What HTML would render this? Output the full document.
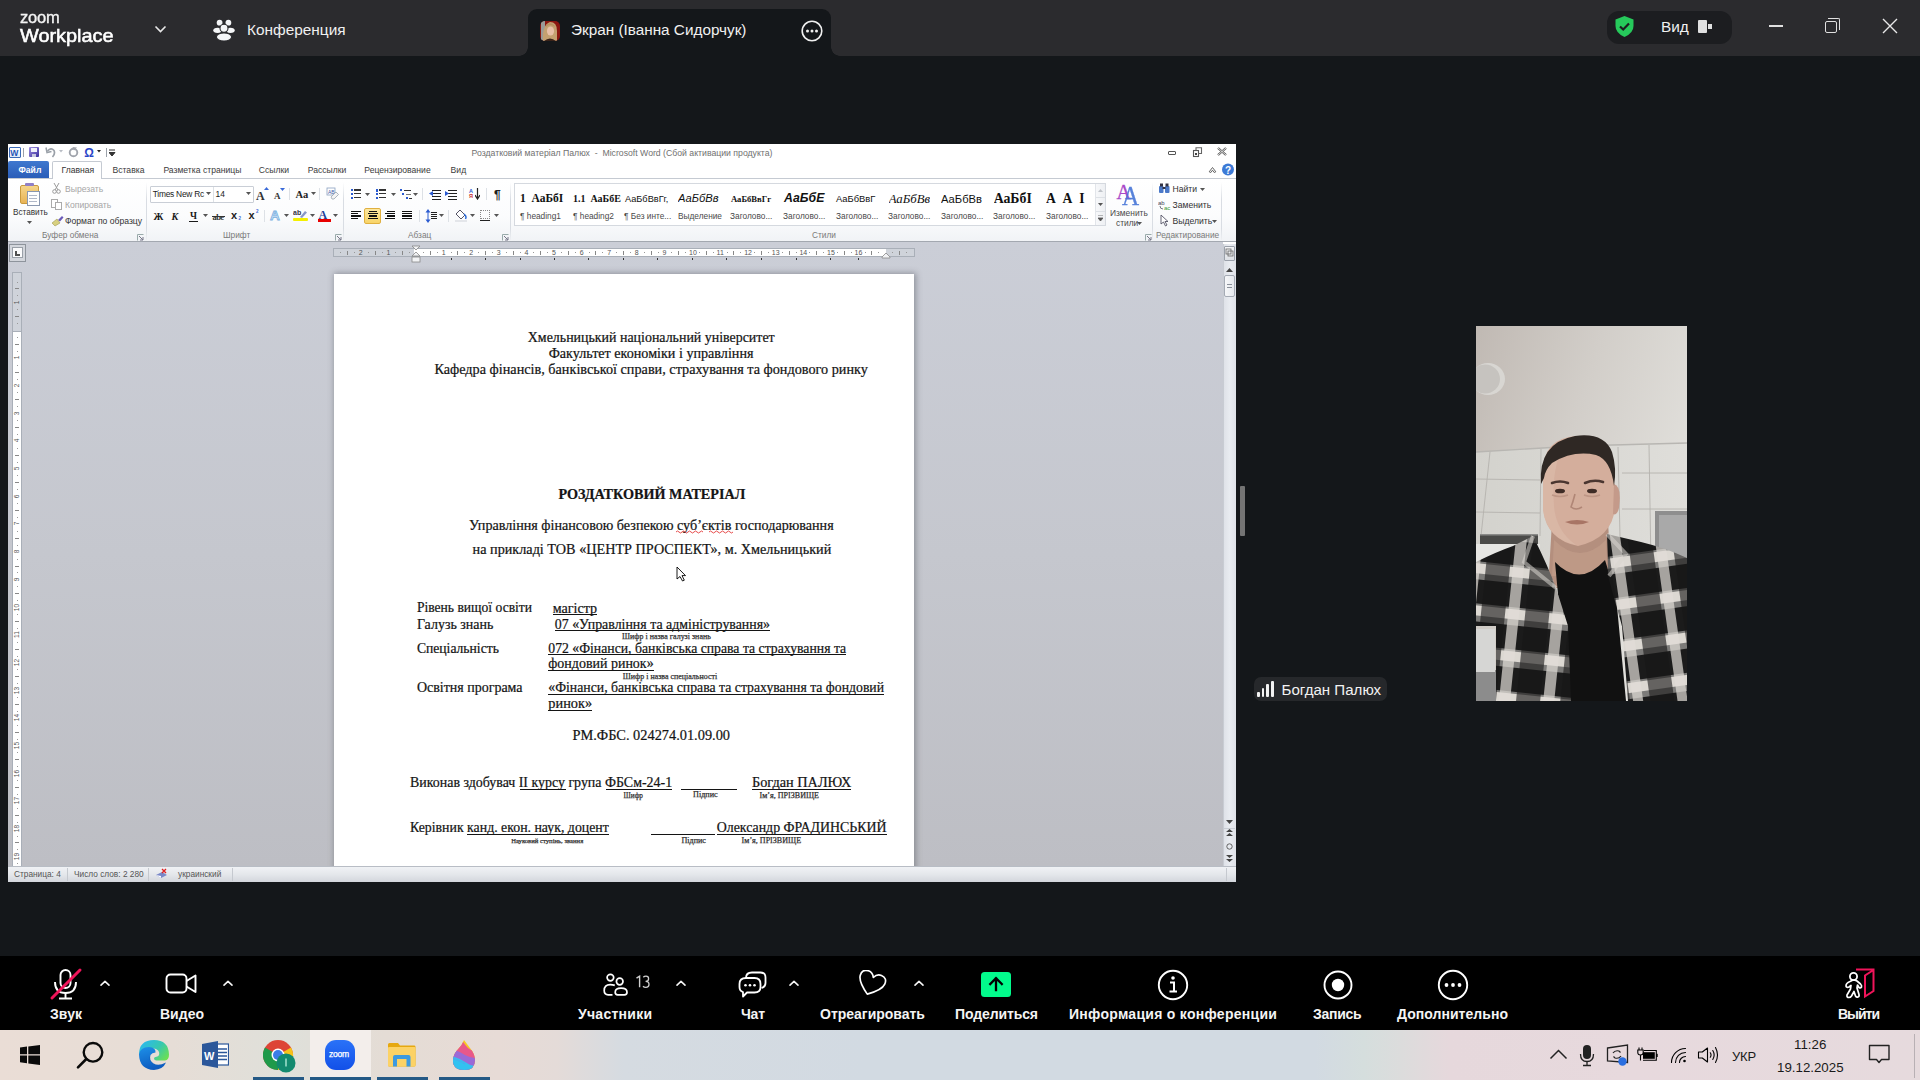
<!DOCTYPE html>
<html><head><meta charset="utf-8">
<style>
*{margin:0;padding:0;box-sizing:border-box}
html,body{width:1920px;height:1080px;overflow:hidden;background:#14171a;font-family:"Liberation Sans",sans-serif}
.a{position:absolute}
.t{position:absolute;white-space:nowrap;line-height:1}
#topbar{left:0;top:0;width:1920px;height:56px;background:#2b2b2e}
</style></head><body>
<div id="topbar" class="a">
  <div class="t" style="left:20px;top:10px;font-size:16px;color:#f4f4f4;-webkit-text-stroke:0.35px #f4f4f4;letter-spacing:-0.2px;transform:scaleX(1.03);transform-origin:0 0">zoom</div>
  <div class="t" style="left:20px;top:27px;font-size:18.6px;color:#fff;-webkit-text-stroke:0.55px #fff;transform:scaleX(1.07);transform-origin:0 0">Workplace</div>
  <svg class="a" style="left:154px;top:24px" width="13" height="10" viewBox="0 0 13 10"><path d="M1.5 2.5 L6.5 7.5 L11.5 2.5" stroke="#e8e8e8" stroke-width="1.6" fill="none"/></svg>
  <svg class="a" style="left:212px;top:18px" width="24" height="24" viewBox="0 0 24 24">
    <circle cx="7.6" cy="4.7" r="2.9" fill="#f5f6f8"/><circle cx="16.4" cy="4.7" r="2.9" fill="#f5f6f8"/>
    <ellipse cx="5.6" cy="12.3" rx="4.3" ry="2.6" fill="#f5f6f8"/><ellipse cx="18.4" cy="12.3" rx="4.3" ry="2.6" fill="#f5f6f8"/>
    <circle cx="12" cy="10.2" r="4" fill="#f5f6f8" stroke="#2b2b2e" stroke-width="1.1"/>
    <ellipse cx="12" cy="19" rx="7.6" ry="4.1" fill="#f5f6f8" stroke="#2b2b2e" stroke-width="1.1"/>
  </svg>
  <div class="t" style="left:247px;top:22px;font-size:15.4px;color:#f0f0f0">Конференция</div>
  <div class="a" style="left:528px;top:9px;width:303px;height:47px;background:#14171a;border-radius:9px 9px 0 0"></div>
  <div class="a" style="left:519px;top:47px;width:9px;height:9px;background:radial-gradient(circle at 0 0,#2b2b2e 8.5px,#14171a 9px)"></div>
  <div class="a" style="left:831px;top:47px;width:9px;height:9px;background:radial-gradient(circle at 100% 0,#2b2b2e 8.5px,#14171a 9px)"></div>
  <svg class="a" style="left:540px;top:21px" width="20" height="20" viewBox="0 0 20 20"><defs><clipPath id="avc"><rect width="20" height="20" rx="5"/></clipPath></defs><g clip-path="url(#avc)"><rect width="20" height="20" fill="#8a1610"/><rect x="1" y="0" width="4" height="20" fill="#9a9a98"/><path d="M3 20 Q2 4 10 1 Q17 1 17 10 L17 20 Z" fill="#c4a070"/><ellipse cx="10.5" cy="10" rx="3.6" ry="4.6" fill="#e8c0a8"/><path d="M6 6 Q10 2 15 6 L14 4 Q10 0.5 6 4 Z" fill="#b89060"/><path d="M4 20 Q10 15 16 20 Z" fill="#3a2218"/></g></svg>
  <div class="t" style="left:571px;top:22px;font-size:15.3px;color:#f0f0f0">Экран (Іванна Сидорчук)</div>
  <svg class="a" style="left:801px;top:20px" width="22" height="22" viewBox="0 0 22 22"><circle cx="11" cy="11" r="9.8" stroke="#f0f0f0" stroke-width="1.6" fill="none"/><circle cx="6.5" cy="11" r="1.5" fill="#f0f0f0"/><circle cx="11" cy="11" r="1.5" fill="#f0f0f0"/><circle cx="15.5" cy="11" r="1.5" fill="#f0f0f0"/></svg>
  <div class="a" style="left:1607px;top:11px;width:125px;height:33px;background:#1c1d20;border-radius:12px"></div>
  <svg class="a" style="left:1614px;top:15px" width="21" height="23" viewBox="0 0 21 23"><path d="M10.5 1 L19.5 4.5 L19.5 11 Q19.5 18 10.5 22 Q1.5 18 1.5 11 L1.5 4.5 Z" fill="#26c95b"/><path d="M6 11.5 L9.2 14.5 L15 8.5" stroke="#1c1d20" stroke-width="2.2" fill="none"/></svg>
  <div class="t" style="left:1661px;top:19px;font-size:15.4px;color:#f0f0f0">Вид</div>
  <div class="a" style="left:1698px;top:20px;width:9px;height:13px;background:#e0e0e0;border-radius:1px"></div>
  <div class="a" style="left:1708px;top:24px;width:3.5px;height:5px;background:#e0e0e0"></div>
  <div class="a" style="left:1769px;top:25px;width:14px;height:2px;background:#e0e0e0"></div>
  <div class="a" style="left:1825px;top:21px;width:12px;height:12px;border:1.5px solid #e0e0e0;border-radius:2px"></div>
  <div class="a" style="left:1828px;top:18px;width:12px;height:12px;border-top:1.5px solid #e0e0e0;border-right:1.5px solid #e0e0e0;border-radius:0 2px 0 0"></div>
  <svg class="a" style="left:1882px;top:18px" width="16" height="16" viewBox="0 0 16 16"><path d="M1 1 L15 15 M15 1 L1 15" stroke="#e8e8e8" stroke-width="1.4"/></svg>
</div>
<div class="a" style="left:8px;top:144px;width:1228px;height:738px;background:#fff;"></div>
<div class="t" style="left:471.5px;top:149.24px;font-family:'Liberation Sans',sans-serif;font-size:8.7px;color:#707070;font-weight:normal;">Роздатковий матеріал Палюх&nbsp; -&nbsp; Microsoft Word (Сбой активации продукта)</div>
<div class="a" style="left:9px;top:147px;width:12px;height:11px;background:linear-gradient(#ffffff,#dfe8f6);border:1px solid #3a6ab8;border-radius:1px"></div>
<div class="t" style="left:10.3px;top:148.92px;font-family:'Liberation Sans',sans-serif;font-size:8.6px;color:#1f56b8;font-weight:bold;letter-spacing:-0.5px">W</div>
<div class="a" style="left:23px;top:148px;width:1px;height:9px;background:#9aa0a8;"></div>
<div class="a" style="left:29px;top:147px;width:10px;height:10px;background:linear-gradient(135deg,#a090e0,#3a2f9e);border-radius:1px"></div>
<div class="a" style="left:31px;top:147.5px;width:6px;height:4px;background:#f0f0fa;"></div>
<div class="a" style="left:32px;top:154px;width:4px;height:2.5px;background:#c8c8e0;"></div>
<svg class="a" style="left:45px;top:146px;" width="11" height="12" viewBox="0 0 11 12"><path d="M2.5 5 Q6 1 9 4.5 Q10.5 8 7.5 11" stroke="#9aa0a8" stroke-width="1.7" fill="none"/><path d="M1 1.5 L2 6.5 L6.5 5.5" stroke="#9aa0a8" stroke-width="1.5" fill="none"/></svg>
<svg class="a" style="left:59px;top:150px;" width="5" height="4" viewBox="0 0 5 4"><path d="M0 0 L4 0 L2 2.5 Z" fill="#b8bcc4"/></svg>
<svg class="a" style="left:68px;top:146px;" width="11" height="12" viewBox="0 0 11 12"><circle cx="5.5" cy="6.5" r="3.8" stroke="#a0a4ac" stroke-width="1.9" fill="none"/><path d="M4.5 1 L9 1.5 L6 4.5" fill="#a0a4ac"/></svg>
<div class="t" style="left:84.3px;top:147.14px;font-family:'Liberation Sans',sans-serif;font-size:12px;color:#2a46c8;font-weight:bold;">Ω</div>
<svg class="a" style="left:97px;top:150px;" width="5" height="4" viewBox="0 0 5 4"><path d="M0 0 L4 0 L2 2.5 Z" fill="#222"/></svg>
<div class="a" style="left:106px;top:148px;width:1px;height:9px;background:#9aa0a8;"></div>
<svg class="a" style="left:109px;top:149px;" width="7" height="8" viewBox="0 0 7 8"><path d="M0 1 H6 M0 3.5 H6 L3 7 Z" stroke="#333" fill="#333" stroke-width="1"/></svg>
<div class="a" style="left:1168px;top:151px;width:8px;height:3.8px;background:#fff;border:1px solid #555;border-radius:1px"></div>
<svg class="a" style="left:1192px;top:146px;" width="12" height="12" viewBox="0 0 12 12"><rect x="1.5" y="4.5" width="5" height="6" fill="#fff" stroke="#555" stroke-width="1.1"/><path d="M4 4.5 V1.8 H9.5 V7.5 H6.5" fill="none" stroke="#666" stroke-width="1.1"/><rect x="3" y="7" width="2" height="2" fill="#444"/></svg>
<svg class="a" style="left:1216px;top:146px;" width="12" height="11" viewBox="0 0 12 11"><path d="M2 2 L10 9 M10 2 L2 9" stroke="#555" stroke-width="2.2"/><path d="M2 2 L10 9 M10 2 L2 9" stroke="#fff" stroke-width="0.8"/></svg>
<div class="a" style="left:8px;top:178px;width:1228px;height:1px;background:#c5cad2;"></div>
<div class="a" style="left:8px;top:161px;width:41px;height:17px;background:linear-gradient(#3f78cf,#2a5db8);border-radius:2px 2px 0 0"></div>
<div class="t" style="left:18.5px;top:165.92px;font-family:'Liberation Sans',sans-serif;font-size:8.6px;color:#fff;font-weight:bold;">Файл</div>
<div class="a" style="left:52px;top:161px;width:50px;height:18px;background:#fff;border:1px solid #c5cad2;border-bottom:none;border-radius:2px 2px 0 0"></div>
<div class="t" style="left:61.5px;top:166.02px;font-family:'Liberation Sans',sans-serif;font-size:8.6px;color:#333;font-weight:normal;">Главная</div>
<div class="t" style="left:112.5px;top:166.02px;font-family:'Liberation Sans',sans-serif;font-size:8.6px;color:#3b3b3b;font-weight:normal;">Вставка</div>
<div class="t" style="left:163.4px;top:166.02px;font-family:'Liberation Sans',sans-serif;font-size:8.6px;color:#3b3b3b;font-weight:normal;">Разметка страницы</div>
<div class="t" style="left:258.8px;top:166.02px;font-family:'Liberation Sans',sans-serif;font-size:8.6px;color:#3b3b3b;font-weight:normal;">Ссылки</div>
<div class="t" style="left:307.7px;top:166.02px;font-family:'Liberation Sans',sans-serif;font-size:8.6px;color:#3b3b3b;font-weight:normal;">Рассылки</div>
<div class="t" style="left:364.3px;top:166.02px;font-family:'Liberation Sans',sans-serif;font-size:8.6px;color:#3b3b3b;font-weight:normal;">Рецензирование</div>
<div class="t" style="left:450.6px;top:166.02px;font-family:'Liberation Sans',sans-serif;font-size:8.6px;color:#3b3b3b;font-weight:normal;">Вид</div>
<svg class="a" style="left:1208px;top:166px;" width="9" height="8" viewBox="0 0 9 8"><path d="M1.2 5.8 L4.5 1.5 L7.8 5.8 L6.2 6.5 L4.5 4.2 L2.8 6.5 Z" stroke="#555" stroke-width="0.9" fill="#fff" stroke-linejoin="round"/></svg>
<svg class="a" style="left:1221px;top:163px;" width="14" height="14" viewBox="0 0 14 14"><circle cx="7" cy="6.5" r="6" fill="#3d7ad6"/><text x="7" y="11" font-family="Liberation Sans" font-weight="bold" font-size="10" fill="#fff" text-anchor="middle">?</text></svg>
<div class="a" style="left:8px;top:179px;width:1228px;height:62px;background:linear-gradient(#ffffff 0%,#fbfcfd 60%,#f1f3f6 100%);"></div>
<div class="a" style="left:8px;top:240.5px;width:1228px;height:1.5px;background:#a3a8b0;"></div>
<div class="a" style="left:146px;top:182px;width:1px;height:58px;background:linear-gradient(#fff,#d9dde3 30%,#d9dde3 80%,#eef0f3);"></div>
<div class="a" style="left:343px;top:182px;width:1px;height:58px;background:linear-gradient(#fff,#d9dde3 30%,#d9dde3 80%,#eef0f3);"></div>
<div class="a" style="left:510px;top:182px;width:1px;height:58px;background:linear-gradient(#fff,#d9dde3 30%,#d9dde3 80%,#eef0f3);"></div>
<div class="a" style="left:1152px;top:182px;width:1px;height:58px;background:linear-gradient(#fff,#d9dde3 30%,#d9dde3 80%,#eef0f3);"></div>
<div class="a" style="left:1221px;top:182px;width:1px;height:58px;background:linear-gradient(#fff,#d9dde3 30%,#d9dde3 80%,#eef0f3);"></div>
<div class="t" style="left:42px;top:231.27px;font-family:'Liberation Sans',sans-serif;font-size:8.3px;color:#7a7a7a;font-weight:normal;">Буфер обмена</div>
<div class="t" style="left:223px;top:231.27px;font-family:'Liberation Sans',sans-serif;font-size:8.3px;color:#7a7a7a;font-weight:normal;">Шрифт</div>
<div class="t" style="left:408px;top:231.27px;font-family:'Liberation Sans',sans-serif;font-size:8.3px;color:#7a7a7a;font-weight:normal;">Абзац</div>
<div class="t" style="left:812px;top:231.27px;font-family:'Liberation Sans',sans-serif;font-size:8.3px;color:#7a7a7a;font-weight:normal;">Стили</div>
<div class="t" style="left:1156px;top:231.27px;font-family:'Liberation Sans',sans-serif;font-size:8.3px;color:#7a7a7a;font-weight:normal;">Редактирование</div>
<svg class="a" style="left:137px;top:234px;" width="7" height="7" viewBox="0 0 7 7"><path d="M0.5 6.5 V0.5 H6.5" stroke="#9aa" fill="none"/><path d="M2 2 L6 6 M6 3 V6 H3" stroke="#778" fill="none"/></svg>
<svg class="a" style="left:335px;top:234px;" width="7" height="7" viewBox="0 0 7 7"><path d="M0.5 6.5 V0.5 H6.5" stroke="#9aa" fill="none"/><path d="M2 2 L6 6 M6 3 V6 H3" stroke="#778" fill="none"/></svg>
<svg class="a" style="left:502px;top:234px;" width="7" height="7" viewBox="0 0 7 7"><path d="M0.5 6.5 V0.5 H6.5" stroke="#9aa" fill="none"/><path d="M2 2 L6 6 M6 3 V6 H3" stroke="#778" fill="none"/></svg>
<svg class="a" style="left:1145px;top:234px;" width="7" height="7" viewBox="0 0 7 7"><path d="M0.5 6.5 V0.5 H6.5" stroke="#9aa" fill="none"/><path d="M2 2 L6 6 M6 3 V6 H3" stroke="#778" fill="none"/></svg>
<div class="a" style="left:20px;top:185px;width:19px;height:19px;background:linear-gradient(#f5d58a,#e8b456);border:1px solid #c99a3e;border-radius:2px"></div>
<div class="a" style="left:25px;top:183px;width:9px;height:3px;background:#9080c8;border-radius:1px"></div>
<div class="a" style="left:27px;top:191px;width:13px;height:15px;background:#fff;border:1px solid #8a98b0"></div>
<div class="a" style="left:29px;top:195px;width:8px;height:1px;background:#b0b8c8;"></div>
<div class="a" style="left:29px;top:198px;width:8px;height:1px;background:#b0b8c8;"></div>
<div class="a" style="left:29px;top:201px;width:8px;height:1px;background:#b0b8c8;"></div>
<div class="t" style="left:13px;top:209.36px;font-family:'Liberation Sans',sans-serif;font-size:8.2px;color:#333;font-weight:normal;">Вставить</div>
<svg class="a" style="left:27px;top:221px;" width="5" height="3" viewBox="0 0 5 3"><path d="M0 0 L5 0 L2.5 3 Z" fill="#555"/></svg>
<svg class="a" style="left:52px;top:183px;" width="9" height="11" viewBox="0 0 9 11"><path d="M2 0 L6 7 M7 0 L3 7" stroke="#9a9a9a" stroke-width="1"/><circle cx="2.5" cy="8.5" r="1.8" stroke="#9a9a9a" fill="none"/><circle cx="6.5" cy="8.5" r="1.8" stroke="#9a9a9a" fill="none"/></svg>
<div class="t" style="left:65px;top:184.92px;font-family:'Liberation Sans',sans-serif;font-size:8.6px;color:#a6a6a6;font-weight:normal;">Вырезать</div>
<svg class="a" style="left:51px;top:199px;" width="12" height="11" viewBox="0 0 12 11"><rect x="0.5" y="0.5" width="6" height="8" fill="#fff" stroke="#aaa"/><rect x="4.5" y="3.5" width="6" height="7" fill="#fff" stroke="#aaa"/></svg>
<div class="t" style="left:65px;top:200.92px;font-family:'Liberation Sans',sans-serif;font-size:8.6px;color:#a6a6a6;font-weight:normal;">Копировать</div>
<svg class="a" style="left:51px;top:215px;" width="13" height="12" viewBox="0 0 13 12"><path d="M1 8 L6 4 L9 8 L4 11 Z" fill="#d8d080" stroke="#a09a50" stroke-width="0.6"/><path d="M7 5 L11 1 L12.5 2.5 L9 6.5" fill="#6a5ab8"/></svg>
<div class="t" style="left:65px;top:216.92px;font-family:'Liberation Sans',sans-serif;font-size:8.6px;color:#333;font-weight:normal;">Формат по образцу</div>
<div class="a" style="left:150px;top:186px;width:104px;height:17px;background:#fff;border:1px solid #c9ced6;border-radius:1px"></div>
<div class="a" style="left:213px;top:187px;width:1px;height:15px;background:#dde1e6;"></div>
<div class="t" style="left:152.8px;top:190.09px;font-family:'Liberation Sans',sans-serif;font-size:8.4px;color:#222;font-weight:normal;letter-spacing:-0.25px">Times New Rc</div>
<svg class="a" style="left:206px;top:192px;" width="5" height="3" viewBox="0 0 5 3"><path d="M0 0 L5 0 L2.5 3 Z" fill="#555"/></svg>
<svg class="a" style="left:246px;top:192px;" width="5" height="3" viewBox="0 0 5 3"><path d="M0 0 L5 0 L2.5 3 Z" fill="#555"/></svg>
<div class="t" style="left:215.6px;top:190.09px;font-family:'Liberation Sans',sans-serif;font-size:8.4px;color:#222;font-weight:normal;">14</div>
<div class="t" style="left:256px;top:189.90px;font-family:'Liberation Serif',serif;font-size:12px;color:#333;font-weight:bold;">A</div>
<svg class="a" style="left:264px;top:187px;" width="5" height="4" viewBox="0 0 5 4"><path d="M0 3 L2.5 0 L5 3 Z" fill="#3a6ad8"/></svg>
<div class="t" style="left:274px;top:192.30px;font-family:'Liberation Serif',serif;font-size:9px;color:#333;font-weight:bold;">A</div>
<svg class="a" style="left:280px;top:188px;" width="5" height="4" viewBox="0 0 5 4"><path d="M0 0 L5 0 L2.5 3 Z" fill="#3a6ad8"/></svg>
<div class="a" style="left:289px;top:188px;width:1px;height:12px;background:#dde1e6;"></div>
<div class="t" style="left:295.5px;top:190.40px;font-family:'Liberation Serif',serif;font-size:10.5px;color:#222;font-weight:bold;">Aa</div>
<svg class="a" style="left:311px;top:192px;" width="5" height="3" viewBox="0 0 5 3"><path d="M0 0 L5 0 L2.5 3 Z" fill="#555"/></svg>
<div class="a" style="left:319px;top:188px;width:1px;height:12px;background:#dde1e6;"></div>
<svg class="a" style="left:326px;top:187px;" width="13" height="13" viewBox="0 0 13 13"><rect x="1" y="1" width="8" height="7" fill="#fff" stroke="#8aa0c0" stroke-width="0.8"/><text x="2" y="7" font-size="5" font-family="Liberation Sans" fill="#3a5aa8">AB</text><path d="M5 10 L10 5 L12.5 7.5 L8 12 L6 12 Z" fill="#f4f4f4" stroke="#9aa4b0" stroke-width="0.8"/></svg>
<div class="t" style="left:153.5px;top:211.50px;font-family:'Liberation Serif',serif;font-size:10px;color:#1a1a1a;font-weight:bold;">Ж</div>
<div class="t" style="left:171.5px;top:211.50px;font-family:'Liberation Serif',serif;font-size:10px;color:#1a1a1a;font-weight:bold;font-style:italic;">К</div>
<div class="t" style="left:190px;top:211.70px;font-family:'Liberation Serif',serif;font-size:9.5px;color:#1a1a1a;font-weight:bold;">Ч</div>
<div class="a" style="left:189px;top:220.5px;width:9px;height:1px;background:#1a1a1a;"></div>
<svg class="a" style="left:203px;top:214px;" width="5" height="3" viewBox="0 0 5 3"><path d="M0 0 L5 0 L2.5 3 Z" fill="#555"/></svg>
<div class="t" style="left:212.5px;top:212.60px;font-family:'Liberation Serif',serif;font-size:8.5px;color:#333;font-weight:bold;letter-spacing:-0.6px">abe</div>
<div class="a" style="left:212px;top:215.5px;width:13px;height:1px;background:#333;"></div>
<div class="t" style="left:231px;top:210.19px;font-family:'Liberation Sans',sans-serif;font-size:11px;color:#222;font-weight:bold;">x</div>
<div class="t" style="left:238.5px;top:217.19px;font-family:'Liberation Sans',sans-serif;font-size:4.5px;color:#3a6ad8;font-weight:bold;">2</div>
<div class="t" style="left:248.5px;top:210.19px;font-family:'Liberation Sans',sans-serif;font-size:11px;color:#222;font-weight:bold;">x</div>
<div class="t" style="left:256px;top:210.19px;font-family:'Liberation Sans',sans-serif;font-size:4.5px;color:#3a6ad8;font-weight:bold;">2</div>
<div class="a" style="left:264px;top:210px;width:1px;height:12px;background:#dde1e6;"></div>
<div class="t" style="left:270px;top:209.07px;font-family:'Liberation Sans',sans-serif;font-size:13.5px;color:#cfe4f8;font-weight:bold;-webkit-text-stroke:0.8px #7ab0e0">A</div>
<svg class="a" style="left:284px;top:214px;" width="5" height="3" viewBox="0 0 5 3"><path d="M0 0 L5 0 L2.5 3 Z" fill="#555"/></svg>
<svg class="a" style="left:293px;top:208px;" width="14" height="11" viewBox="0 0 14 11"><text x="0" y="7" font-size="7" font-family="Liberation Sans" font-weight="bold" fill="#334">ab</text><path d="M7 9 L12 3 L14 4.5 L9 10 Z" fill="#8898c8"/></svg>
<div class="a" style="left:293px;top:218px;width:15px;height:3px;background:#f4f000;border-radius:1px"></div>
<svg class="a" style="left:310px;top:214px;" width="5" height="3" viewBox="0 0 5 3"><path d="M0 0 L5 0 L2.5 3 Z" fill="#555"/></svg>
<div class="t" style="left:318.5px;top:208.90px;font-family:'Liberation Serif',serif;font-size:12px;color:#1f3f9a;font-weight:bold;">A</div>
<div class="a" style="left:318px;top:219px;width:13px;height:3px;background:#e80000;"></div>
<svg class="a" style="left:333px;top:214px;" width="5" height="3" viewBox="0 0 5 3"><path d="M0 0 L5 0 L2.5 3 Z" fill="#555"/></svg>
<div class="a" style="left:350.5px;top:189.0px;width:2px;height:2px;background:#2a5ad0;"></div>
<div class="a" style="left:350.5px;top:192.8px;width:2px;height:2px;background:#2a5ad0;"></div>
<div class="a" style="left:350.5px;top:196.6px;width:2px;height:2px;background:#2a5ad0;"></div>
<div class="a" style="left:354px;top:189.3px;width:7px;height:1.3px;background:#333;"></div>
<div class="a" style="left:354px;top:193.10000000000002px;width:7px;height:1.3px;background:#333;"></div>
<div class="a" style="left:354px;top:196.9px;width:7px;height:1.3px;background:#333;"></div>
<svg class="a" style="left:365px;top:193px;" width="5" height="3" viewBox="0 0 5 3"><path d="M0 0 L5 0 L2.5 3 Z" fill="#555"/></svg>
<div class="a" style="left:375.5px;top:189.0px;width:2px;height:2.5px;background:#2a5ad0;"></div>
<div class="a" style="left:375.5px;top:192.8px;width:2px;height:2.5px;background:#2a5ad0;"></div>
<div class="a" style="left:375.5px;top:196.6px;width:2px;height:2.5px;background:#2a5ad0;"></div>
<div class="a" style="left:379px;top:189.3px;width:7px;height:1.3px;background:#333;"></div>
<div class="a" style="left:379px;top:193.10000000000002px;width:7px;height:1.3px;background:#333;"></div>
<div class="a" style="left:379px;top:196.9px;width:7px;height:1.3px;background:#333;"></div>
<svg class="a" style="left:391px;top:193px;" width="5" height="3" viewBox="0 0 5 3"><path d="M0 0 L5 0 L2.5 3 Z" fill="#555"/></svg>
<div class="a" style="left:400px;top:189px;width:2px;height:2px;background:#2a5ad0;"></div>
<div class="a" style="left:404px;top:189.5px;width:7px;height:1.3px;background:#333;"></div>
<div class="a" style="left:402px;top:193px;width:2px;height:2px;background:#2a5ad0;"></div>
<div class="a" style="left:406px;top:193.5px;width:5px;height:1.3px;background:#777;"></div>
<div class="a" style="left:406px;top:197px;width:2px;height:2px;background:#2a5ad0;"></div>
<div class="a" style="left:409px;top:197.5px;width:3px;height:1.3px;background:#333;"></div>
<svg class="a" style="left:413px;top:193px;" width="5" height="3" viewBox="0 0 5 3"><path d="M0 0 L5 0 L2.5 3 Z" fill="#555"/></svg>
<div class="a" style="left:422px;top:188px;width:1px;height:12px;background:#dde1e6;"></div>
<div class="a" style="left:432px;top:189.5px;width:9px;height:1.4px;background:#222;"></div>
<div class="a" style="left:432px;top:192.5px;width:9px;height:1.4px;background:#222;"></div>
<div class="a" style="left:432px;top:195.5px;width:9px;height:1.4px;background:#222;"></div>
<div class="a" style="left:432px;top:198.5px;width:9px;height:1.4px;background:#222;"></div>
<svg class="a" style="left:429px;top:191px;" width="5" height="5" viewBox="0 0 5 5"><path d="M0 2.5 L4 0 L4 5 Z" fill="#2a5ad0"/></svg>
<div class="a" style="left:448px;top:189.5px;width:9px;height:1.4px;background:#222;"></div>
<div class="a" style="left:448px;top:192.5px;width:9px;height:1.4px;background:#222;"></div>
<div class="a" style="left:448px;top:195.5px;width:9px;height:1.4px;background:#222;"></div>
<div class="a" style="left:448px;top:198.5px;width:9px;height:1.4px;background:#222;"></div>
<svg class="a" style="left:445px;top:191px;" width="5" height="5" viewBox="0 0 5 5"><path d="M4 2.5 L0 0 L0 5 Z" fill="#2a5ad0"/></svg>
<div class="a" style="left:463px;top:188px;width:1px;height:12px;background:#dde1e6;"></div>
<div class="t" style="left:469px;top:189.14px;font-family:'Liberation Sans',sans-serif;font-size:5.5px;color:#2a5ad0;font-weight:bold;">A</div>
<div class="t" style="left:469px;top:194.34px;font-family:'Liberation Sans',sans-serif;font-size:5.5px;color:#c83030;font-weight:bold;">Я</div>
<svg class="a" style="left:475px;top:188px;" width="5" height="12" viewBox="0 0 5 12"><path d="M2.5 0 V10 M0 7 L2.5 11 L5 7" stroke="#222" stroke-width="1.2" fill="none"/></svg>
<div class="a" style="left:486px;top:188px;width:1px;height:12px;background:#dde1e6;"></div>
<div class="t" style="left:494px;top:189.34px;font-family:'Liberation Sans',sans-serif;font-size:12px;color:#222;font-weight:bold;">¶</div>
<div class="a" style="left:364px;top:207.5px;width:17px;height:16px;background:linear-gradient(#fde8a0,#f8d468);border:1px solid #e0b040;border-radius:2px"></div>
<div class="a" style="left:351px;top:211.0px;width:10px;height:1.3px;background:#111;"></div>
<div class="a" style="left:351px;top:213.2px;width:7px;height:1.3px;background:#111;"></div>
<div class="a" style="left:351px;top:215.4px;width:10px;height:1.3px;background:#111;"></div>
<div class="a" style="left:351px;top:217.6px;width:7px;height:1.3px;background:#111;"></div>
<div class="a" style="left:369.0px;top:211.0px;width:8px;height:1.3px;background:#111;"></div>
<div class="a" style="left:368.0px;top:213.2px;width:10px;height:1.3px;background:#111;"></div>
<div class="a" style="left:369.0px;top:215.4px;width:8px;height:1.3px;background:#111;"></div>
<div class="a" style="left:368.0px;top:217.6px;width:10px;height:1.3px;background:#111;"></div>
<div class="a" style="left:387px;top:211.0px;width:8px;height:1.3px;background:#111;"></div>
<div class="a" style="left:385px;top:213.2px;width:10px;height:1.3px;background:#111;"></div>
<div class="a" style="left:387px;top:215.4px;width:8px;height:1.3px;background:#111;"></div>
<div class="a" style="left:385px;top:217.6px;width:10px;height:1.3px;background:#111;"></div>
<div class="a" style="left:402px;top:211.0px;width:10px;height:1.3px;background:#111;"></div>
<div class="a" style="left:402px;top:213.2px;width:10px;height:1.3px;background:#111;"></div>
<div class="a" style="left:402px;top:215.4px;width:10px;height:1.3px;background:#111;"></div>
<div class="a" style="left:402px;top:217.6px;width:10px;height:1.3px;background:#111;"></div>
<div class="a" style="left:419px;top:210px;width:1px;height:12px;background:#dde1e6;"></div>
<svg class="a" style="left:425px;top:209px;" width="6" height="14" viewBox="0 0 6 14"><path d="M3 0 L5.5 3.5 H0.5 Z M3 14 L5.5 10.5 H0.5 Z" fill="#2a5ad0"/><path d="M3 3 V11" stroke="#2a5ad0" stroke-width="1"/></svg>
<div class="a" style="left:431px;top:211.5px;width:6px;height:1.2px;background:#222;"></div>
<div class="a" style="left:431px;top:213.7px;width:6px;height:1.2px;background:#222;"></div>
<div class="a" style="left:431px;top:215.9px;width:6px;height:1.2px;background:#222;"></div>
<div class="a" style="left:431px;top:218.1px;width:6px;height:1.2px;background:#222;"></div>
<svg class="a" style="left:439px;top:214px;" width="5" height="3" viewBox="0 0 5 3"><path d="M0 0 L5 0 L2.5 3 Z" fill="#555"/></svg>
<div class="a" style="left:448px;top:210px;width:1px;height:12px;background:#dde1e6;"></div>
<svg class="a" style="left:454px;top:209px;" width="13" height="12" viewBox="0 0 13 12"><path d="M2 5 L6 1 L11 6 L7 10 Z" fill="#fff" stroke="#556" stroke-width="1"/><path d="M10 5 Q13 7 11.5 10" stroke="#2a6ad8" stroke-width="1.5" fill="none"/></svg>
<div class="a" style="left:455px;top:220px;width:12px;height:2px;background:#e4e6ea;"></div>
<svg class="a" style="left:470px;top:214px;" width="5" height="3" viewBox="0 0 5 3"><path d="M0 0 L5 0 L2.5 3 Z" fill="#555"/></svg>
<div class="a" style="left:480px;top:210px;width:10px;height:9px;background:transparent;border:1px dotted #888"></div>
<div class="a" style="left:480px;top:219.5px;width:10px;height:1.3px;background:#222;"></div>
<svg class="a" style="left:494px;top:214px;" width="5" height="3" viewBox="0 0 5 3"><path d="M0 0 L5 0 L2.5 3 Z" fill="#555"/></svg>
<div class="a" style="left:514px;top:183px;width:592px;height:43px;background:#fff;border:1px solid #d5d9df"></div>
<div class="a" style="left:1095px;top:184px;width:1px;height:41px;background:#e2e5ea;"></div>
<div class="a" style="left:1096px;top:184px;width:9px;height:41px;background:linear-gradient(90deg,#f7f8fa,#eef0f3);"></div>
<div class="a" style="left:1096px;top:197px;width:9px;height:1px;background:#dde1e6;"></div>
<div class="a" style="left:1096px;top:211px;width:9px;height:1px;background:#dde1e6;"></div>
<svg class="a" style="left:1098px;top:189px;" width="5" height="3" viewBox="0 0 5 3"><path d="M0 3 L2.5 0 L5 3 Z" fill="#c0c4ca"/></svg>
<svg class="a" style="left:1098px;top:203px;" width="5" height="3" viewBox="0 0 5 3"><path d="M0 0 L5 0 L2.5 3 Z" fill="#555"/></svg>
<svg class="a" style="left:1098px;top:215px;" width="5" height="6" viewBox="0 0 5 6"><path d="M0 0 H5 M0 3 L5 3 L2.5 6 Z" stroke="#555" fill="#555" stroke-width="0.8"/></svg>
<div class="t" style="left:520px;top:193.40px;font-family:'Liberation Serif',serif;font-size:11.5px;color:#111;font-weight:bold;letter-spacing:-0.3pxoverflow:hidden;max-width:44px">1&nbsp; АаБбІ</div>
<div class="t" style="left:573px;top:194.30px;font-family:'Liberation Serif',serif;font-size:10px;color:#111;font-weight:bold;letter-spacing:-0.4pxoverflow:hidden;max-width:44px">1.1&nbsp; АаБбЕ</div>
<div class="t" style="left:625px;top:194.71px;font-family:'Liberation Sans',sans-serif;font-size:9.2px;color:#111;font-weight:normal;letter-spacing:-0.3pxoverflow:hidden;max-width:44px">АаБбВвГг,</div>
<div class="t" style="left:678px;top:193.12px;font-family:'Liberation Sans',sans-serif;font-size:11.2px;color:#111;font-weight:normal;font-style:italic;overflow:hidden;max-width:44px">АаБбВв</div>
<div class="t" style="left:731px;top:195.32px;font-family:'Liberation Serif',serif;font-size:8.6px;color:#111;font-weight:bold;letter-spacing:-0.2pxoverflow:hidden;max-width:44px">АаБбВвГг</div>
<div class="t" style="left:784px;top:192.19px;font-family:'Liberation Sans',sans-serif;font-size:12.3px;color:#111;font-weight:bold;font-style:italic;letter-spacing:-0.5pxoverflow:hidden;max-width:44px">АаБбЕ</div>
<div class="t" style="left:836px;top:194.24px;font-family:'Liberation Sans',sans-serif;font-size:9.4px;color:#111;font-weight:normal;letter-spacing:-0.3pxoverflow:hidden;max-width:44px">АаБбВвГ</div>
<div class="t" style="left:888.7px;top:192.76px;font-family:'Liberation Serif',serif;font-size:12.8px;color:#111;font-weight:normal;font-style:italic;overflow:hidden;max-width:44px">АаБбВв</div>
<div class="t" style="left:941px;top:193.52px;font-family:'Liberation Sans',sans-serif;font-size:11.2px;color:#111;font-weight:normal;overflow:hidden;max-width:44px">АаБбВв</div>
<div class="t" style="left:993.7px;top:192.46px;font-family:'Liberation Serif',serif;font-size:13.8px;color:#111;font-weight:bold;overflow:hidden;max-width:44px">АаБбІ</div>
<div class="t" style="left:1046px;top:192.42px;font-family:'Liberation Serif',serif;font-size:13.6px;color:#111;font-weight:bold;overflow:hidden;max-width:44px">А&nbsp; А&nbsp; І</div>
<div class="t" style="left:520px;top:211.57px;font-family:'Liberation Sans',sans-serif;font-size:8.3px;color:#4a4a4a;font-weight:normal;">¶ heading1</div>
<div class="t" style="left:573px;top:211.57px;font-family:'Liberation Sans',sans-serif;font-size:8.3px;color:#4a4a4a;font-weight:normal;">¶ heading2</div>
<div class="t" style="left:624px;top:211.57px;font-family:'Liberation Sans',sans-serif;font-size:8.3px;color:#4a4a4a;font-weight:normal;">¶ Без инте...</div>
<div class="t" style="left:678px;top:211.57px;font-family:'Liberation Sans',sans-serif;font-size:8.3px;color:#4a4a4a;font-weight:normal;">Выделение</div>
<div class="t" style="left:730px;top:211.57px;font-family:'Liberation Sans',sans-serif;font-size:8.3px;color:#4a4a4a;font-weight:normal;">Заголово...</div>
<div class="t" style="left:783px;top:211.57px;font-family:'Liberation Sans',sans-serif;font-size:8.3px;color:#4a4a4a;font-weight:normal;">Заголово...</div>
<div class="t" style="left:836px;top:211.57px;font-family:'Liberation Sans',sans-serif;font-size:8.3px;color:#4a4a4a;font-weight:normal;">Заголово...</div>
<div class="t" style="left:888px;top:211.57px;font-family:'Liberation Sans',sans-serif;font-size:8.3px;color:#4a4a4a;font-weight:normal;">Заголово...</div>
<div class="t" style="left:941px;top:211.57px;font-family:'Liberation Sans',sans-serif;font-size:8.3px;color:#4a4a4a;font-weight:normal;">Заголово...</div>
<div class="t" style="left:993px;top:211.57px;font-family:'Liberation Sans',sans-serif;font-size:8.3px;color:#4a4a4a;font-weight:normal;">Заголово...</div>
<div class="t" style="left:1046px;top:211.57px;font-family:'Liberation Sans',sans-serif;font-size:8.3px;color:#4a4a4a;font-weight:normal;">Заголово...</div>
<div class="t" style="left:1116.5px;top:182.00px;font-family:'Liberation Serif',serif;font-size:20px;color:#a848c8;font-weight:normal;-webkit-text-stroke:0.3px #a848c8">A</div>
<div class="t" style="left:1121.5px;top:182.70px;font-family:'Liberation Serif',serif;font-size:27px;color:#4a78d8;font-weight:normal;-webkit-text-stroke:0.3px #4a78d8;transform:scaleX(0.88);transform-origin:0 0;opacity:0.92">A</div>
<div class="t" style="left:1110px;top:209.49px;font-family:'Liberation Sans',sans-serif;font-size:8.4px;color:#4a4a4a;font-weight:normal;">Изменить</div>
<div class="t" style="left:1116px;top:218.89px;font-family:'Liberation Sans',sans-serif;font-size:8.4px;color:#4a4a4a;font-weight:normal;">стили</div>
<svg class="a" style="left:1137px;top:222px;" width="5" height="3" viewBox="0 0 5 3"><path d="M0 0 L5 0 L2.5 3 Z" fill="#555"/></svg>
<svg class="a" style="left:1158px;top:183px;" width="13" height="11" viewBox="0 0 13 11"><rect x="1" y="3" width="4.5" height="7" rx="1" fill="#4a78c8"/><rect x="7" y="3" width="4.5" height="7" rx="1" fill="#4a78c8"/><rect x="2" y="0.5" width="3" height="3" fill="#334"/><rect x="7.5" y="0.5" width="3" height="3" fill="#334"/><rect x="4.5" y="4" width="3" height="2" fill="#334"/></svg>
<div class="t" style="left:1172.5px;top:184.52px;font-family:'Liberation Sans',sans-serif;font-size:8.6px;color:#333;font-weight:normal;">Найти</div>
<svg class="a" style="left:1200px;top:188px;" width="5" height="3" viewBox="0 0 5 3"><path d="M0 0 L5 0 L2.5 3 Z" fill="#555"/></svg>
<svg class="a" style="left:1158px;top:199px;" width="15" height="12" viewBox="0 0 15 12"><text x="0" y="5.5" font-size="6" font-family="Liberation Sans" fill="#445">ab</text><text x="6" y="11" font-size="6" font-family="Liberation Sans" fill="#3a9a3a">ac</text><path d="M2 7 Q2 10 5 10" stroke="#556" fill="none" stroke-width="0.8"/></svg>
<div class="t" style="left:1172.5px;top:200.72px;font-family:'Liberation Sans',sans-serif;font-size:8.6px;color:#333;font-weight:normal;">Заменить</div>
<svg class="a" style="left:1160px;top:214px;" width="10" height="13" viewBox="0 0 10 13"><path d="M1 1 L1 10 L3.5 8 L5.5 12 L7 11 L5 7.5 L8 7.5 Z" fill="#fff" stroke="#556" stroke-width="0.9"/></svg>
<div class="t" style="left:1172.5px;top:216.72px;font-family:'Liberation Sans',sans-serif;font-size:8.6px;color:#333;font-weight:normal;">Выделить</div>
<svg class="a" style="left:1212px;top:220px;" width="5" height="3" viewBox="0 0 5 3"><path d="M0 0 L5 0 L2.5 3 Z" fill="#555"/></svg>
<div class="a" style="left:8px;top:242px;width:1215px;height:624px;background:linear-gradient(#cbced7,#c5c7ce 50%,#bdbec4);"></div>
<div class="a" style="left:8.5px;top:244px;width:17px;height:17.5px;background:#d3d6dc;border:1px solid #8e949c"></div>
<div class="a" style="left:12px;top:247px;width:10.5px;height:10.5px;background:#fbfbfc;border:1px solid #9aa0a8"></div>
<div class="a" style="left:15px;top:251px;width:1.8px;height:4.8px;background:#505050;"></div>
<div class="a" style="left:15px;top:254px;width:4.5px;height:1.8px;background:#505050;"></div>
<div class="a" style="left:333px;top:248px;width:582px;height:9px;background:#cfd3da;border:1px solid #a9afb8"></div>
<div class="a" style="left:414px;top:249px;width:472px;height:7px;background:#fff;"></div>
<div class="t" style="left:357.8px;top:248.5px;width:6px;text-align:center;font-size:7px;color:#555">2</div>
<div class="t" style="left:385.4px;top:248.5px;width:6px;text-align:center;font-size:7px;color:#555">1</div>
<div class="t" style="left:440.6px;top:248.5px;width:6px;text-align:center;font-size:7px;color:#555">1</div>
<div class="t" style="left:468.2px;top:248.5px;width:6px;text-align:center;font-size:7px;color:#555">2</div>
<div class="t" style="left:495.8px;top:248.5px;width:6px;text-align:center;font-size:7px;color:#555">3</div>
<div class="t" style="left:523.4px;top:248.5px;width:6px;text-align:center;font-size:7px;color:#555">4</div>
<div class="t" style="left:551.0px;top:248.5px;width:6px;text-align:center;font-size:7px;color:#555">5</div>
<div class="t" style="left:578.6px;top:248.5px;width:6px;text-align:center;font-size:7px;color:#555">6</div>
<div class="t" style="left:606.2px;top:248.5px;width:6px;text-align:center;font-size:7px;color:#555">7</div>
<div class="t" style="left:633.8px;top:248.5px;width:6px;text-align:center;font-size:7px;color:#555">8</div>
<div class="t" style="left:661.4px;top:248.5px;width:6px;text-align:center;font-size:7px;color:#555">9</div>
<div class="t" style="left:689.0px;top:248.5px;width:6px;text-align:center;font-size:7px;color:#555">10</div>
<div class="t" style="left:716.6px;top:248.5px;width:6px;text-align:center;font-size:7px;color:#555">11</div>
<div class="t" style="left:744.2px;top:248.5px;width:6px;text-align:center;font-size:7px;color:#555">12</div>
<div class="t" style="left:771.8px;top:248.5px;width:6px;text-align:center;font-size:7px;color:#555">13</div>
<div class="t" style="left:799.4px;top:248.5px;width:6px;text-align:center;font-size:7px;color:#555">14</div>
<div class="t" style="left:827.0px;top:248.5px;width:6px;text-align:center;font-size:7px;color:#555">15</div>
<div class="t" style="left:854.6px;top:248.5px;width:6px;text-align:center;font-size:7px;color:#555">16</div>
<div class="a" style="left:347.0px;top:250.5px;width:1px;height:4px;background:#888;"></div>
<div class="a" style="left:374.6px;top:250.5px;width:1px;height:4px;background:#888;"></div>
<div class="a" style="left:402.2px;top:250.5px;width:1px;height:4px;background:#888;"></div>
<div class="a" style="left:429.8px;top:250.5px;width:1px;height:4px;background:#888;"></div>
<div class="a" style="left:457.4px;top:250.5px;width:1px;height:4px;background:#888;"></div>
<div class="a" style="left:485.0px;top:250.5px;width:1px;height:4px;background:#888;"></div>
<div class="a" style="left:512.6px;top:250.5px;width:1px;height:4px;background:#888;"></div>
<div class="a" style="left:540.2px;top:250.5px;width:1px;height:4px;background:#888;"></div>
<div class="a" style="left:567.8px;top:250.5px;width:1px;height:4px;background:#888;"></div>
<div class="a" style="left:595.4px;top:250.5px;width:1px;height:4px;background:#888;"></div>
<div class="a" style="left:623.0px;top:250.5px;width:1px;height:4px;background:#888;"></div>
<div class="a" style="left:650.6px;top:250.5px;width:1px;height:4px;background:#888;"></div>
<div class="a" style="left:678.2px;top:250.5px;width:1px;height:4px;background:#888;"></div>
<div class="a" style="left:705.8px;top:250.5px;width:1px;height:4px;background:#888;"></div>
<div class="a" style="left:733.4px;top:250.5px;width:1px;height:4px;background:#888;"></div>
<div class="a" style="left:761.0px;top:250.5px;width:1px;height:4px;background:#888;"></div>
<div class="a" style="left:788.6px;top:250.5px;width:1px;height:4px;background:#888;"></div>
<div class="a" style="left:816.2px;top:250.5px;width:1px;height:4px;background:#888;"></div>
<div class="a" style="left:843.8px;top:250.5px;width:1px;height:4px;background:#888;"></div>
<div class="a" style="left:871.4px;top:250.5px;width:1px;height:4px;background:#888;"></div>
<div class="a" style="left:899.0px;top:250.5px;width:1px;height:4px;background:#888;"></div>
<div class="a" style="left:340.1px;top:252px;width:1px;height:1px;background:#999;"></div>
<div class="a" style="left:353.9px;top:252px;width:1px;height:1px;background:#999;"></div>
<div class="a" style="left:367.7px;top:252px;width:1px;height:1px;background:#999;"></div>
<div class="a" style="left:381.5px;top:252px;width:1px;height:1px;background:#999;"></div>
<div class="a" style="left:395.3px;top:252px;width:1px;height:1px;background:#999;"></div>
<div class="a" style="left:409.1px;top:252px;width:1px;height:1px;background:#999;"></div>
<div class="a" style="left:422.9px;top:252px;width:1px;height:1px;background:#999;"></div>
<div class="a" style="left:436.7px;top:252px;width:1px;height:1px;background:#999;"></div>
<div class="a" style="left:450.5px;top:252px;width:1px;height:1px;background:#999;"></div>
<div class="a" style="left:464.3px;top:252px;width:1px;height:1px;background:#999;"></div>
<div class="a" style="left:478.1px;top:252px;width:1px;height:1px;background:#999;"></div>
<div class="a" style="left:491.9px;top:252px;width:1px;height:1px;background:#999;"></div>
<div class="a" style="left:505.7px;top:252px;width:1px;height:1px;background:#999;"></div>
<div class="a" style="left:519.5px;top:252px;width:1px;height:1px;background:#999;"></div>
<div class="a" style="left:533.3px;top:252px;width:1px;height:1px;background:#999;"></div>
<div class="a" style="left:547.1px;top:252px;width:1px;height:1px;background:#999;"></div>
<div class="a" style="left:560.9px;top:252px;width:1px;height:1px;background:#999;"></div>
<div class="a" style="left:574.7px;top:252px;width:1px;height:1px;background:#999;"></div>
<div class="a" style="left:588.5px;top:252px;width:1px;height:1px;background:#999;"></div>
<div class="a" style="left:602.3px;top:252px;width:1px;height:1px;background:#999;"></div>
<div class="a" style="left:616.1px;top:252px;width:1px;height:1px;background:#999;"></div>
<div class="a" style="left:629.9px;top:252px;width:1px;height:1px;background:#999;"></div>
<div class="a" style="left:643.7px;top:252px;width:1px;height:1px;background:#999;"></div>
<div class="a" style="left:657.5px;top:252px;width:1px;height:1px;background:#999;"></div>
<div class="a" style="left:671.3px;top:252px;width:1px;height:1px;background:#999;"></div>
<div class="a" style="left:685.1px;top:252px;width:1px;height:1px;background:#999;"></div>
<div class="a" style="left:698.9px;top:252px;width:1px;height:1px;background:#999;"></div>
<div class="a" style="left:712.7px;top:252px;width:1px;height:1px;background:#999;"></div>
<div class="a" style="left:726.5px;top:252px;width:1px;height:1px;background:#999;"></div>
<div class="a" style="left:740.3px;top:252px;width:1px;height:1px;background:#999;"></div>
<div class="a" style="left:754.1px;top:252px;width:1px;height:1px;background:#999;"></div>
<div class="a" style="left:767.9px;top:252px;width:1px;height:1px;background:#999;"></div>
<div class="a" style="left:781.7px;top:252px;width:1px;height:1px;background:#999;"></div>
<div class="a" style="left:795.5px;top:252px;width:1px;height:1px;background:#999;"></div>
<div class="a" style="left:809.3px;top:252px;width:1px;height:1px;background:#999;"></div>
<div class="a" style="left:823.1px;top:252px;width:1px;height:1px;background:#999;"></div>
<div class="a" style="left:836.9px;top:252px;width:1px;height:1px;background:#999;"></div>
<div class="a" style="left:850.7px;top:252px;width:1px;height:1px;background:#999;"></div>
<div class="a" style="left:864.5px;top:252px;width:1px;height:1px;background:#999;"></div>
<div class="a" style="left:878.3px;top:252px;width:1px;height:1px;background:#999;"></div>
<div class="a" style="left:892.1px;top:252px;width:1px;height:1px;background:#999;"></div>
<div class="a" style="left:905.9px;top:252px;width:1px;height:1px;background:#999;"></div>
<svg class="a" style="left:411px;top:245px;" width="11" height="19" viewBox="0 0 11 19"><path d="M1 1 H9 L5 5 Z" fill="#f2f3f5" stroke="#888" stroke-width="0.8"/><path d="M5 7 L9 11 H1 Z" fill="#f2f3f5" stroke="#888" stroke-width="0.8"/><rect x="1" y="12" width="8" height="5" fill="#f2f3f5" stroke="#888" stroke-width="0.8"/></svg>
<svg class="a" style="left:881px;top:252px;" width="10" height="7" viewBox="0 0 10 7"><path d="M5 1 L9 5 V6 H1 V5 Z" fill="#f2f3f5" stroke="#888" stroke-width="0.8"/></svg>
<div class="a" style="left:451px;top:258px;width:1px;height:2px;background:#333;"></div>
<div class="a" style="left:485px;top:258px;width:1px;height:2px;background:#333;"></div>
<div class="a" style="left:520px;top:258px;width:1px;height:2px;background:#333;"></div>
<div class="a" style="left:554px;top:258px;width:1px;height:2px;background:#333;"></div>
<div class="a" style="left:588px;top:258px;width:1px;height:2px;background:#333;"></div>
<div class="a" style="left:623px;top:258px;width:1px;height:2px;background:#333;"></div>
<div class="a" style="left:657px;top:258px;width:1px;height:2px;background:#333;"></div>
<div class="a" style="left:692px;top:258px;width:1px;height:2px;background:#333;"></div>
<div class="a" style="left:726px;top:258px;width:1px;height:2px;background:#333;"></div>
<div class="a" style="left:761px;top:258px;width:1px;height:2px;background:#333;"></div>
<div class="a" style="left:796px;top:258px;width:1px;height:2px;background:#333;"></div>
<div class="a" style="left:830px;top:258px;width:1px;height:2px;background:#333;"></div>
<div class="a" style="left:858px;top:258px;width:1px;height:2px;background:#333;"></div>
<div class="a" style="left:12px;top:272px;width:10px;height:594px;background:#fff;border-left:1px solid #a9afb8;border-right:1px solid #a9afb8"></div>
<div class="a" style="left:12px;top:272px;width:10px;height:60px;background:#cfd3da;border:1px solid #a9afb8"></div>
<div class="t" style="left:13px;top:298.8px;width:8px;height:7px;text-align:center;font-size:6.5px;color:#555;transform:rotate(-90deg)">1</div>
<div class="t" style="left:13px;top:354.2px;width:8px;height:7px;text-align:center;font-size:6.5px;color:#555;transform:rotate(-90deg)">1</div>
<div class="t" style="left:13px;top:381.9px;width:8px;height:7px;text-align:center;font-size:6.5px;color:#555;transform:rotate(-90deg)">2</div>
<div class="t" style="left:13px;top:409.6px;width:8px;height:7px;text-align:center;font-size:6.5px;color:#555;transform:rotate(-90deg)">3</div>
<div class="t" style="left:13px;top:437.3px;width:8px;height:7px;text-align:center;font-size:6.5px;color:#555;transform:rotate(-90deg)">4</div>
<div class="t" style="left:13px;top:465.0px;width:8px;height:7px;text-align:center;font-size:6.5px;color:#555;transform:rotate(-90deg)">5</div>
<div class="t" style="left:13px;top:492.7px;width:8px;height:7px;text-align:center;font-size:6.5px;color:#555;transform:rotate(-90deg)">6</div>
<div class="t" style="left:13px;top:520.4px;width:8px;height:7px;text-align:center;font-size:6.5px;color:#555;transform:rotate(-90deg)">7</div>
<div class="t" style="left:13px;top:548.1px;width:8px;height:7px;text-align:center;font-size:6.5px;color:#555;transform:rotate(-90deg)">8</div>
<div class="t" style="left:13px;top:575.8px;width:8px;height:7px;text-align:center;font-size:6.5px;color:#555;transform:rotate(-90deg)">9</div>
<div class="t" style="left:13px;top:603.5px;width:8px;height:7px;text-align:center;font-size:6.5px;color:#555;transform:rotate(-90deg)">10</div>
<div class="t" style="left:13px;top:631.2px;width:8px;height:7px;text-align:center;font-size:6.5px;color:#555;transform:rotate(-90deg)">11</div>
<div class="t" style="left:13px;top:658.9px;width:8px;height:7px;text-align:center;font-size:6.5px;color:#555;transform:rotate(-90deg)">12</div>
<div class="t" style="left:13px;top:686.6px;width:8px;height:7px;text-align:center;font-size:6.5px;color:#555;transform:rotate(-90deg)">13</div>
<div class="t" style="left:13px;top:714.3px;width:8px;height:7px;text-align:center;font-size:6.5px;color:#555;transform:rotate(-90deg)">14</div>
<div class="t" style="left:13px;top:742.0px;width:8px;height:7px;text-align:center;font-size:6.5px;color:#555;transform:rotate(-90deg)">15</div>
<div class="t" style="left:13px;top:769.7px;width:8px;height:7px;text-align:center;font-size:6.5px;color:#555;transform:rotate(-90deg)">16</div>
<div class="t" style="left:13px;top:797.4px;width:8px;height:7px;text-align:center;font-size:6.5px;color:#555;transform:rotate(-90deg)">17</div>
<div class="t" style="left:13px;top:825.1px;width:8px;height:7px;text-align:center;font-size:6.5px;color:#555;transform:rotate(-90deg)">18</div>
<div class="t" style="left:13px;top:852.8px;width:8px;height:7px;text-align:center;font-size:6.5px;color:#555;transform:rotate(-90deg)">19</div>
<div class="a" style="left:15px;top:288.4px;width:4px;height:1px;background:#888;"></div>
<div class="a" style="left:15px;top:316.1px;width:4px;height:1px;background:#888;"></div>
<div class="a" style="left:15px;top:343.9px;width:4px;height:1px;background:#888;"></div>
<div class="a" style="left:15px;top:371.6px;width:4px;height:1px;background:#888;"></div>
<div class="a" style="left:15px;top:399.2px;width:4px;height:1px;background:#888;"></div>
<div class="a" style="left:15px;top:426.9px;width:4px;height:1px;background:#888;"></div>
<div class="a" style="left:15px;top:454.6px;width:4px;height:1px;background:#888;"></div>
<div class="a" style="left:15px;top:482.4px;width:4px;height:1px;background:#888;"></div>
<div class="a" style="left:15px;top:510.0px;width:4px;height:1px;background:#888;"></div>
<div class="a" style="left:15px;top:537.8px;width:4px;height:1px;background:#888;"></div>
<div class="a" style="left:15px;top:565.5px;width:4px;height:1px;background:#888;"></div>
<div class="a" style="left:15px;top:593.1px;width:4px;height:1px;background:#888;"></div>
<div class="a" style="left:15px;top:620.8px;width:4px;height:1px;background:#888;"></div>
<div class="a" style="left:15px;top:648.5px;width:4px;height:1px;background:#888;"></div>
<div class="a" style="left:15px;top:676.2px;width:4px;height:1px;background:#888;"></div>
<div class="a" style="left:15px;top:704.0px;width:4px;height:1px;background:#888;"></div>
<div class="a" style="left:15px;top:731.6px;width:4px;height:1px;background:#888;"></div>
<div class="a" style="left:15px;top:759.3px;width:4px;height:1px;background:#888;"></div>
<div class="a" style="left:15px;top:787.0px;width:4px;height:1px;background:#888;"></div>
<div class="a" style="left:15px;top:814.8px;width:4px;height:1px;background:#888;"></div>
<div class="a" style="left:15px;top:842.4px;width:4px;height:1px;background:#888;"></div>
<div class="a" style="left:17px;top:281.5px;width:1px;height:1px;background:#999;"></div>
<div class="a" style="left:17px;top:295.4px;width:1px;height:1px;background:#999;"></div>
<div class="a" style="left:17px;top:309.2px;width:1px;height:1px;background:#999;"></div>
<div class="a" style="left:17px;top:323.1px;width:1px;height:1px;background:#999;"></div>
<div class="a" style="left:17px;top:336.9px;width:1px;height:1px;background:#999;"></div>
<div class="a" style="left:17px;top:350.8px;width:1px;height:1px;background:#999;"></div>
<div class="a" style="left:17px;top:364.6px;width:1px;height:1px;background:#999;"></div>
<div class="a" style="left:17px;top:378.5px;width:1px;height:1px;background:#999;"></div>
<div class="a" style="left:17px;top:392.3px;width:1px;height:1px;background:#999;"></div>
<div class="a" style="left:17px;top:406.2px;width:1px;height:1px;background:#999;"></div>
<div class="a" style="left:17px;top:420.0px;width:1px;height:1px;background:#999;"></div>
<div class="a" style="left:17px;top:433.9px;width:1px;height:1px;background:#999;"></div>
<div class="a" style="left:17px;top:447.7px;width:1px;height:1px;background:#999;"></div>
<div class="a" style="left:17px;top:461.6px;width:1px;height:1px;background:#999;"></div>
<div class="a" style="left:17px;top:475.4px;width:1px;height:1px;background:#999;"></div>
<div class="a" style="left:17px;top:489.3px;width:1px;height:1px;background:#999;"></div>
<div class="a" style="left:17px;top:503.1px;width:1px;height:1px;background:#999;"></div>
<div class="a" style="left:17px;top:517.0px;width:1px;height:1px;background:#999;"></div>
<div class="a" style="left:17px;top:530.8px;width:1px;height:1px;background:#999;"></div>
<div class="a" style="left:17px;top:544.7px;width:1px;height:1px;background:#999;"></div>
<div class="a" style="left:17px;top:558.5px;width:1px;height:1px;background:#999;"></div>
<div class="a" style="left:17px;top:572.4px;width:1px;height:1px;background:#999;"></div>
<div class="a" style="left:17px;top:586.2px;width:1px;height:1px;background:#999;"></div>
<div class="a" style="left:17px;top:600.1px;width:1px;height:1px;background:#999;"></div>
<div class="a" style="left:17px;top:613.9px;width:1px;height:1px;background:#999;"></div>
<div class="a" style="left:17px;top:627.8px;width:1px;height:1px;background:#999;"></div>
<div class="a" style="left:17px;top:641.6px;width:1px;height:1px;background:#999;"></div>
<div class="a" style="left:17px;top:655.5px;width:1px;height:1px;background:#999;"></div>
<div class="a" style="left:17px;top:669.3px;width:1px;height:1px;background:#999;"></div>
<div class="a" style="left:17px;top:683.2px;width:1px;height:1px;background:#999;"></div>
<div class="a" style="left:17px;top:697.0px;width:1px;height:1px;background:#999;"></div>
<div class="a" style="left:17px;top:710.9px;width:1px;height:1px;background:#999;"></div>
<div class="a" style="left:17px;top:724.7px;width:1px;height:1px;background:#999;"></div>
<div class="a" style="left:17px;top:738.6px;width:1px;height:1px;background:#999;"></div>
<div class="a" style="left:17px;top:752.4px;width:1px;height:1px;background:#999;"></div>
<div class="a" style="left:17px;top:766.3px;width:1px;height:1px;background:#999;"></div>
<div class="a" style="left:17px;top:780.1px;width:1px;height:1px;background:#999;"></div>
<div class="a" style="left:17px;top:794.0px;width:1px;height:1px;background:#999;"></div>
<div class="a" style="left:17px;top:807.8px;width:1px;height:1px;background:#999;"></div>
<div class="a" style="left:17px;top:821.7px;width:1px;height:1px;background:#999;"></div>
<div class="a" style="left:17px;top:835.5px;width:1px;height:1px;background:#999;"></div>
<div class="a" style="left:17px;top:849.4px;width:1px;height:1px;background:#999;"></div>
<div class="a" style="left:17px;top:863.2px;width:1px;height:1px;background:#999;"></div>
<div class="a" style="left:334px;top:274px;width:580px;height:600px;background:#fff;box-shadow:1px 0 6px 1px rgba(70,75,85,0.45)"></div>
<div class="a" style="left:1223px;top:244px;width:13px;height:622px;background:linear-gradient(90deg,#dfe2e8,#e9ecf1 50%,#dfe2e8);border-left:1px solid #c8ccd3"></div>
<div class="a" style="left:1224px;top:246px;width:11px;height:15px;background:linear-gradient(#f5f6f8,#dde0e5);border:1px solid #9aa0aa;border-radius:1px"></div>
<svg class="a" style="left:1225px;top:248px;" width="9" height="10" viewBox="0 0 9 10"><rect x="1" y="1" width="5" height="5" fill="none" stroke="#666" stroke-width="0.8"/><rect x="3" y="3" width="5" height="5" fill="none" stroke="#666" stroke-width="0.8"/></svg>
<svg class="a" style="left:1226px;top:268px;" width="7" height="5" viewBox="0 0 7 5"><path d="M0 4 L3.5 0 L7 4 Z" fill="#444"/></svg>
<div class="a" style="left:1224px;top:275px;width:11px;height:22px;background:linear-gradient(90deg,#f6f7f9,#e6e9ee);border:1px solid #a5abb5;border-radius:2px"></div>
<div class="a" style="left:1227px;top:284px;width:5px;height:1px;background:#8a909a;"></div>
<div class="a" style="left:1227px;top:287px;width:5px;height:1px;background:#8a909a;"></div>
<svg class="a" style="left:1226px;top:820px;" width="7" height="5" viewBox="0 0 7 5"><path d="M0 0 L3.5 4 L7 0 Z" fill="#444"/></svg>
<div class="a" style="left:1224px;top:828px;width:11px;height:1px;background:#c8ccd3;"></div>
<svg class="a" style="left:1226px;top:829px;" width="7" height="8" viewBox="0 0 7 8"><path d="M0 3 L3.5 0 L7 3 Z M0 7 L3.5 4 L7 7 Z" fill="#444"/></svg>
<svg class="a" style="left:1226px;top:843px;" width="7" height="7" viewBox="0 0 7 7"><circle cx="3.5" cy="3.5" r="2.7" fill="none" stroke="#555" stroke-width="0.9"/></svg>
<svg class="a" style="left:1226px;top:855px;" width="7" height="8" viewBox="0 0 7 8"><path d="M0 0 L3.5 3 L7 0 Z M0 4 L3.5 7 L7 4 Z" fill="#444"/></svg>
<div class="a" style="left:8px;top:866px;width:1228px;height:16px;background:linear-gradient(#f0f2f5,#e4e7eb 50%,#d3d6dc);border-top:1px solid #b8bdc5"></div>
<div class="t" style="left:14px;top:870.27px;font-family:'Liberation Sans',sans-serif;font-size:8.3px;color:#555;font-weight:normal;">Страница: 4</div>
<div class="a" style="left:67px;top:868px;width:1px;height:13px;background:#c5c9cf;"></div>
<div class="t" style="left:74px;top:870.27px;font-family:'Liberation Sans',sans-serif;font-size:8.3px;color:#555;font-weight:normal;">Число слов: 2 280</div>
<div class="a" style="left:148px;top:868px;width:1px;height:13px;background:#c5c9cf;"></div>
<svg class="a" style="left:155px;top:868px;" width="13" height="11" viewBox="0 0 13 11"><path d="M1 7 L7 4 L12 7 L6 10 Z" fill="#7a88c8"/><path d="M1 7 L6 10 L6 8 Z" fill="#fff"/><path d="M7 1 L11 5 M11 1 L7 5" stroke="#e02020" stroke-width="1.3"/></svg>
<div class="t" style="left:178px;top:870.27px;font-family:'Liberation Sans',sans-serif;font-size:8.3px;color:#555;font-weight:normal;">украинский</div>
<div class="a" style="left:232px;top:868px;width:1px;height:13px;background:#c5c9cf;"></div>
<div class="a" style="left:1226px;top:868px;width:1px;height:13px;background:#c5c9cf;"></div>
<div class="t" style="left:527.8px;top:330.66px;font-family:'Liberation Serif',serif;font-size:13.93px;color:#141414;font-weight:normal;-webkit-text-stroke:0.22px #141414">Хмельницький національний університет</div>
<div class="t" style="left:548.7px;top:346.29px;font-family:'Liberation Serif',serif;font-size:14.14px;color:#141414;font-weight:normal;-webkit-text-stroke:0.22px #141414">Факультет економіки і управління</div>
<div class="t" style="left:434.4px;top:362.32px;font-family:'Liberation Serif',serif;font-size:14.22px;color:#141414;font-weight:normal;-webkit-text-stroke:0.22px #141414">Кафедра фінансів, банківської справи, страхування та фондового ринку</div>
<div class="t" style="left:558.5px;top:487.34px;font-family:'Liberation Serif',serif;font-size:14.2px;color:#141414;font-weight:bold;-webkit-text-stroke:0.22px #141414">РОЗДАТКОВИЙ МАТЕРІАЛ</div>
<div class="t" style="left:469.1px;top:518.10px;font-family:'Liberation Serif',serif;font-size:14.13px;color:#141414;font-weight:normal;-webkit-text-stroke:0.22px #141414">Управління фінансовою безпекою суб’єктів господарювання</div>
<svg class="a" style="left:676px;top:530px;" width="57" height="4" viewBox="0 0 57 4"><path d="M0 2 Q1.5 0 3 2 T6 2 T9 2 T12 2 T15 2 T18 2 T21 2 T24 2 T27 2" stroke="#e02020" stroke-width="0.8" fill="none"/><path d="M33 2 Q34.5 0 36 2 T39 2 T42 2 T45 2 T48 2 T51 2 T54 2 T57 2" stroke="#e02020" stroke-width="0.8" fill="none"/></svg>
<div class="t" style="left:472.6px;top:542.13px;font-family:'Liberation Serif',serif;font-size:14.21px;color:#141414;font-weight:normal;-webkit-text-stroke:0.22px #141414">на прикладі ТОВ «ЦЕНТР ПРОСПЕКТ», м. Хмельницький</div>
<div class="t" style="left:416.9px;top:601.44px;font-family:'Liberation Serif',serif;font-size:13.58px;color:#141414;font-weight:normal;-webkit-text-stroke:0.22px #141414">Рівень вищої освіти</div>
<div class="t" style="left:552.7px;top:601.02px;font-family:'Liberation Serif',serif;font-size:14.1px;color:#141414;font-weight:normal;-webkit-text-stroke:0.22px #141414">магістр</div>
<div class="a" style="left:552.7px;top:614px;width:44.3px;height:1px;background:#141414;"></div>
<div class="t" style="left:416.9px;top:617.52px;font-family:'Liberation Serif',serif;font-size:13.98px;color:#141414;font-weight:normal;-webkit-text-stroke:0.22px #141414">Галузь знань</div>
<div class="t" style="left:554.8px;top:617.58px;font-family:'Liberation Serif',serif;font-size:13.9px;color:#141414;font-weight:normal;-webkit-text-stroke:0.22px #141414">07 «Управління та адміністрування»</div>
<div class="a" style="left:554.8px;top:630px;width:215.5px;height:1px;background:#141414;"></div>
<div class="t" style="left:622px;top:632.62px;font-family:'Liberation Serif',serif;font-size:7.98px;color:#333;font-weight:normal;-webkit-text-stroke:0.25px #333">Шифр і назва галузі знань</div>
<div class="t" style="left:416.9px;top:641.60px;font-family:'Liberation Serif',serif;font-size:13.63px;color:#141414;font-weight:normal;-webkit-text-stroke:0.22px #141414">Спеціальність</div>
<div class="t" style="left:548.3px;top:641.51px;font-family:'Liberation Serif',serif;font-size:13.74px;color:#141414;font-weight:normal;-webkit-text-stroke:0.22px #141414">072 «Фінанси, банківська справа та страхування та</div>
<div class="a" style="left:548.3px;top:654px;width:297.9px;height:1px;background:#141414;"></div>
<div class="t" style="left:548.3px;top:656.92px;font-family:'Liberation Serif',serif;font-size:13.97px;color:#141414;font-weight:normal;-webkit-text-stroke:0.22px #141414">фондовий ринок»</div>
<div class="a" style="left:548.3px;top:670px;width:105.3px;height:1px;background:#141414;"></div>
<div class="t" style="left:622.8px;top:672.63px;font-family:'Liberation Serif',serif;font-size:7.96px;color:#333;font-weight:normal;-webkit-text-stroke:0.25px #333">Шифр і назва спеціальності</div>
<div class="t" style="left:416.9px;top:681.31px;font-family:'Liberation Serif',serif;font-size:13.99px;color:#141414;font-weight:normal;-webkit-text-stroke:0.22px #141414">Освітня програма</div>
<div class="t" style="left:548.3px;top:681.49px;font-family:'Liberation Serif',serif;font-size:13.76px;color:#141414;font-weight:normal;-webkit-text-stroke:0.22px #141414">«Фінанси, банківська справа та страхування та фондовий</div>
<div class="a" style="left:548.3px;top:694px;width:336.0px;height:1px;background:#141414;"></div>
<div class="t" style="left:548.3px;top:696.34px;font-family:'Liberation Serif',serif;font-size:14.33px;color:#141414;font-weight:normal;-webkit-text-stroke:0.22px #141414">ринок»</div>
<div class="a" style="left:548.3px;top:710px;width:43.7px;height:1px;background:#141414;"></div>
<div class="t" style="left:572.5px;top:728.41px;font-family:'Liberation Serif',serif;font-size:14.36px;color:#141414;font-weight:normal;-webkit-text-stroke:0.22px #141414">РМ.ФБС. 024274.01.09.00</div>
<div class="t" style="left:410px;top:775.76px;font-family:'Liberation Serif',serif;font-size:13.93px;color:#141414;font-weight:normal;-webkit-text-stroke:0.22px #141414">Виконав здобувач II курсу група ФБСм-24-1</div>
<div class="a" style="left:519.8px;top:788.5px;width:46.4px;height:1px;background:#141414;"></div>
<div class="a" style="left:605.5px;top:788.5px;width:66.8px;height:1px;background:#141414;"></div>
<div class="a" style="left:681px;top:789px;width:56.3px;height:1px;background:#141414;"></div>
<div class="a" style="left:752px;top:788.5px;width:99.3px;height:1px;background:#141414;"></div>
<div class="t" style="left:752px;top:775.47px;font-family:'Liberation Serif',serif;font-size:14.29px;color:#141414;font-weight:normal;-webkit-text-stroke:0.22px #141414">Богдан ПАЛЮХ</div>
<div class="t" style="left:623.6px;top:792.74px;font-family:'Liberation Serif',serif;font-size:7.2px;color:#333;font-weight:normal;-webkit-text-stroke:0.25px #333">Шифр</div>
<div class="t" style="left:693px;top:791.46px;font-family:'Liberation Serif',serif;font-size:8.17px;color:#333;font-weight:normal;-webkit-text-stroke:0.25px #333">Підпис</div>
<div class="t" style="left:759.6px;top:791.56px;font-family:'Liberation Serif',serif;font-size:8.05px;color:#333;font-weight:normal;-webkit-text-stroke:0.25px #333">Ім’я, ПРІЗВИЩЕ</div>
<div class="t" style="left:410px;top:821.03px;font-family:'Liberation Serif',serif;font-size:13.84px;color:#141414;font-weight:normal;-webkit-text-stroke:0.22px #141414">Керівник канд. екон. наук, доцент</div>
<div class="a" style="left:467.4px;top:834px;width:141.8px;height:1px;background:#141414;"></div>
<div class="a" style="left:650.8px;top:834px;width:63.9px;height:1px;background:#141414;"></div>
<div class="t" style="left:716.7px;top:820.99px;font-family:'Liberation Serif',serif;font-size:13.89px;color:#141414;font-weight:normal;-webkit-text-stroke:0.22px #141414">Олександр ФРАДИНСЬКИЙ</div>
<div class="a" style="left:716.7px;top:834px;width:169.9px;height:1px;background:#141414;"></div>
<div class="t" style="left:511.2px;top:838.18px;font-family:'Liberation Serif',serif;font-size:6.65px;color:#333;font-weight:normal;-webkit-text-stroke:0.25px #333">Науковий ступінь, звання</div>
<div class="t" style="left:681.4px;top:836.50px;font-family:'Liberation Serif',serif;font-size:8.13px;color:#333;font-weight:normal;-webkit-text-stroke:0.25px #333">Підпис</div>
<div class="t" style="left:741.6px;top:836.54px;font-family:'Liberation Serif',serif;font-size:8.07px;color:#333;font-weight:normal;-webkit-text-stroke:0.25px #333">Ім’я, ПРІЗВИЩЕ</div>
<svg class="a" style="left:676px;top:566px;" width="10" height="16" viewBox="0 0 10 16"><path d="M1 1 L1 13 L4 10.5 L6.5 15 L8.3 14.2 L6 9.6 L9.5 9.6 Z" fill="#fff" stroke="#000" stroke-width="0.9" stroke-linejoin="round"/></svg>
<div class="a" style="left:1240px;top:486px;width:5px;height:50px;background:#747474;border-radius:1px"></div>
<div class="a" style="left:1254px;top:677px;width:133px;height:24px;background:#26282b;border-radius:7px"></div>
<div class="a" style="left:1257px;top:692px;width:2.5px;height:4.5px;background:#f2f2f2;border-radius:1px"></div>
<div class="a" style="left:1261.5px;top:688px;width:2.5px;height:8.5px;background:#f2f2f2;border-radius:1px"></div>
<div class="a" style="left:1266px;top:684px;width:2.5px;height:12.5px;background:#f2f2f2;border-radius:1px"></div>
<div class="a" style="left:1271px;top:681px;width:3px;height:15.5px;background:#f2f2f2;border-radius:1px"></div>
<div class="t" style="left:1281.5px;top:682.32px;font-family:'Liberation Sans',sans-serif;font-size:15.1px;color:#f2f2f2;font-weight:normal;">Богдан Палюх</div>
<div class="a" style="left:1476px;top:326px;width:211px;height:375px;overflow:hidden"><svg style="display:block;filter:blur(0.6px)" width="211" height="375" viewBox="0 0 211 375">
<g>
<defs>
<linearGradient id="ceil" x1="0" y1="0" x2="1" y2="0.6"><stop offset="0" stop-color="#c0b9b3"/><stop offset="0.45" stop-color="#d2cec9"/><stop offset="1" stop-color="#e4e3df"/></linearGradient><linearGradient id="cab" x1="0" y1="0" x2="1" y2="0"><stop offset="0" stop-color="#d3d2cd"/><stop offset="1" stop-color="#dfdeda"/></linearGradient>
<pattern id="plaid" width="44" height="42" patternUnits="userSpaceOnUse" patternTransform="translate(37 241) rotate(6)">
<rect width="44" height="42" fill="#7c7b79"/>
<rect x="0" y="0" width="44" height="10" fill="#dcd8d2"/>
<rect x="0" y="16" width="44" height="24" fill="#1b1b1b"/>
<rect x="0" y="0" width="11" height="42" fill="#e2ded8" opacity="0.7"/>
<rect x="17" y="0" width="24" height="42" fill="#161616" opacity="0.6"/>
</pattern>
<pattern id="plaid2" width="44" height="42" patternUnits="userSpaceOnUse" patternTransform="translate(137 232) rotate(-8)">
<rect width="44" height="42" fill="#7c7b79"/>
<rect x="0" y="0" width="44" height="10" fill="#dcd8d2"/>
<rect x="0" y="16" width="44" height="24" fill="#1b1b1b"/>
<rect x="0" y="0" width="10" height="42" fill="#e2ded8" opacity="0.7"/>
<rect x="17" y="0" width="24" height="42" fill="#161616" opacity="0.6"/>
</pattern>
</defs>
<rect width="211" height="375" fill="url(#ceil)"/>
<ellipse cx="12" cy="53" rx="17" ry="16" fill="#d8d6d2"/><ellipse cx="9" cy="53" rx="15" ry="14.5" fill="#c6c3bf"/>
<path d="M0 126 L100 120 L211 117 L211 300 L0 300 Z" fill="url(#cab)"/>
<path d="M0 126 L100 120 L211 117" stroke="#b8b6b2" stroke-width="1.4" fill="none"/>
<path d="M14 126 L5 210 M65 123 L64 210 M142 121 L146 300 M173 119 L176 300 M0 153 L64 154 M146 147 L211 147 M0 186 L64 187 M146 183 L211 183" stroke="#b4b2ae" stroke-width="0.9" fill="none"/>
<rect x="4" y="209" width="58" height="9" fill="#4a4a48"/>
<rect x="4" y="208" width="58" height="1.5" fill="#8a8a88"/>
<rect x="0" y="218" width="64" height="30" fill="#e6e6e3"/>
<rect x="179" y="185" width="32" height="95" fill="#8e8e8e"/>
<rect x="183" y="189" width="28" height="91" fill="#a9a9a9"/>
<path d="M0 344 L22 344 L22 375 L0 375 Z" fill="#8a8a8a"/>
<path d="M76 196 Q104 226 132 196 L136 262 L72 262 Z" fill="#b48f7e"/>
<path d="M78 214 Q104 240 130 214 L132 250 L76 250 Z" fill="#c29c8a" opacity="0.7"/>
<path d="M67 150 Q65 112 101 110 Q136 108 138 150 L139 182 Q136 212 102 220 Q71 214 67 184 Z" fill="#d4ae9c"/>
<path d="M67 150 Q66 125 90 114 Q75 140 78 180 Q80 205 100 219 Q71 213 67 184 Z" fill="#dcbcac" opacity="0.6"/>
<path d="M138 158 Q146 160 143 182 Q141 190 137 188 Z" fill="#c49a8a"/>
<path d="M65 158 Q62 117 99 110 Q128 106 136 126 Q141 142 138 160 Q135 134 120 129 Q97 124 76 137 Q69 144 68 152 Z" fill="#2f2824"/>
<path d="M76 157 Q84 154 92 157 M109 157 Q118 153 127 156" stroke="#4a3630" stroke-width="2.6" fill="none" stroke-linecap="round"/>
<ellipse cx="84" cy="165" rx="5" ry="2.3" fill="#3e2c26"/><ellipse cx="116" cy="165" rx="5" ry="2.3" fill="#3e2c26"/>
<path d="M76 169 Q84 172 92 169 M108 169 Q116 172 124 169" stroke="#b89080" stroke-width="1.5" fill="none" opacity="0.8"/>
<path d="M99 168 Q97 176 95 181 Q100 185 106 181" stroke="#b08676" stroke-width="1.6" fill="none"/>
<path d="M89 196 Q101 192 113 196 Q101 201 89 196 Z" fill="#a87565"/>
<rect x="0" y="303" width="19" height="45" fill="#d6d6d4"/>
<path d="M0 346 L20 346 L20 375 L0 375 Z" fill="#8c8c8c"/>
<path d="M79 236 Q104 262 129 234 L140 270 L150 375 L94 375 L84 290 Z" fill="#111"/>
<path d="M0 236 Q20 226 37 220 L57 210 Q72 240 80 262 L92 300 L95 375 L20 375 L20 300 L0 300 Z" fill="url(#plaid)"/>
<path d="M211 232 Q190 222 165 216 L131 208 Q132 230 132 250 L146 300 L152 375 L211 375 Z" fill="url(#plaid2)"/>
<path d="M57 210 L48 236 L80 262 M131 208 L150 228 L133 250" stroke="#d8d5d0" stroke-width="4" fill="none" opacity="0.55"/>
</g>
</svg></div>
<div class="a" style="left:0px;top:956px;width:1920px;height:74px;background:#000;"></div>
<svg class="a" style="left:48px;top:967px;" width="36" height="34" viewBox="0 0 36 34"><rect x="12.5" y="3" width="10" height="18" rx="5" stroke="#fff" stroke-width="1.9" fill="none"/>
<path d="M7 15 Q7 26 17.5 26 Q28 26 28 15" stroke="#fff" stroke-width="1.9" fill="none"/>
<path d="M17.5 26 V31.5 M11 31.5 H24" stroke="#fff" stroke-width="1.9" fill="none"/>
<path d="M4 31 L32 3" stroke="#f0145a" stroke-width="3" stroke-linecap="round"/></svg>
<svg class="a" style="left:99px;top:979px;" width="12" height="8" viewBox="0 0 12 8"><path d="M2 6.2 L6 2.4 L10 6.2" stroke="#f4f4f4" stroke-width="1.6" fill="none" stroke-linecap="round" stroke-linejoin="round"/></svg>
<div class="t" style="left:50px;top:1006.65px;font-family:'Liberation Sans',sans-serif;font-size:14px;color:#f4f4f4;font-weight:bold;letter-spacing:0.06px">Звук</div>
<svg class="a" style="left:165px;top:973px;" width="34" height="22" viewBox="0 0 34 22"><rect x="1.5" y="1.5" width="20" height="18" rx="4" stroke="#fff" stroke-width="1.9" fill="none"/><path d="M21.5 8 L30.5 2.5 V19 L21.5 13.5" stroke="#fff" stroke-width="1.9" fill="none" stroke-linejoin="round"/></svg>
<svg class="a" style="left:222px;top:979px;" width="12" height="8" viewBox="0 0 12 8"><path d="M2 6.2 L6 2.4 L10 6.2" stroke="#f4f4f4" stroke-width="1.6" fill="none" stroke-linecap="round" stroke-linejoin="round"/></svg>
<div class="t" style="left:160px;top:1006.65px;font-family:'Liberation Sans',sans-serif;font-size:14px;color:#f4f4f4;font-weight:bold;letter-spacing:0.01px">Видео</div>
<svg class="a" style="left:602px;top:972px;" width="27" height="25" viewBox="0 0 27 25"><circle cx="8.4" cy="5.6" r="3.3" stroke="#fff" stroke-width="1.7" fill="none"/><circle cx="17.7" cy="9.5" r="3.3" stroke="#fff" stroke-width="1.7" fill="none"/><path d="M12.8 13.4 Q10.8 12.6 8.2 12.6 Q2.2 12.6 2.2 18.5 Q2.2 22.8 6.2 22.8 H10.5" stroke="#fff" stroke-width="1.7" fill="none"/><path d="M13.2 20.3 Q13.2 16.2 19.1 16.2 Q25 16.2 25 20.3 Q25 22.8 22.5 22.8 H15.7 Q13.2 22.8 13.2 20.3 Z" stroke="#fff" stroke-width="1.7" fill="none"/></svg>
<svg class="a" style="left:635px;top:975px;" width="16" height="14" viewBox="0 0 16 14"><path d="M1.5 3.2 L4.6 1.2 V12.2" stroke="#cfcfcf" stroke-width="1.4" fill="none"/><path d="M8.3 2.3 Q9.3 1.2 11 1.2 Q13.6 1.2 13.6 3.8 Q13.6 6.3 10.6 6.4 Q14 6.5 14 9.3 Q14 12.4 10.8 12.4 Q9 12.4 8 11.3" stroke="#cfcfcf" stroke-width="1.3" fill="none"/></svg>
<svg class="a" style="left:675px;top:979px;" width="12" height="8" viewBox="0 0 12 8"><path d="M2 6.2 L6 2.4 L10 6.2" stroke="#f4f4f4" stroke-width="1.6" fill="none" stroke-linecap="round" stroke-linejoin="round"/></svg>
<div class="t" style="left:578px;top:1006.65px;font-family:'Liberation Sans',sans-serif;font-size:14px;color:#f4f4f4;font-weight:bold;letter-spacing:0.26px">Участники</div>
<svg class="a" style="left:737px;top:969px;" width="31" height="30" viewBox="0 0 31 30"><path d="M9 9 Q9 3.5 15 3.5 H23.5 Q28.5 3.5 28.5 8.5 V14 Q28.5 18 24.5 19" stroke="#fff" stroke-width="1.8" fill="none"/>
<path d="M2.5 15 Q2.5 9 9 9 H17.5 Q23.5 9 23.5 15 V18 Q23.5 23.5 17.5 23.5 H10 L6 27.5 V23 Q2.5 22 2.5 18 Z" stroke="#fff" stroke-width="1.8" fill="#000" stroke-linejoin="round"/>
<circle cx="8.5" cy="16.3" r="1.3" fill="#fff"/><circle cx="13" cy="16.3" r="1.3" fill="#fff"/><circle cx="17.5" cy="16.3" r="1.3" fill="#fff"/></svg>
<svg class="a" style="left:788px;top:979px;" width="12" height="8" viewBox="0 0 12 8"><path d="M2 6.2 L6 2.4 L10 6.2" stroke="#f4f4f4" stroke-width="1.6" fill="none" stroke-linecap="round" stroke-linejoin="round"/></svg>
<div class="t" style="left:741px;top:1006.65px;font-family:'Liberation Sans',sans-serif;font-size:14px;color:#f4f4f4;font-weight:bold;letter-spacing:-0.23px">Чат</div>
<svg class="a" style="left:855px;top:970px;" width="33" height="29" viewBox="0 0 33 29"><path d="M16.5 26.5 Q3 17 2.5 10 Q2 3 9 2.5 Q14 2.3 16.5 7.5 Q19 2.3 24 2.5 Q31 3 30.5 10 Q30 17 16.5 26.5 Z" stroke="#fff" stroke-width="1.8" fill="none" stroke-linejoin="round" transform="translate(0.5 0.5) rotate(20 16.5 14) scale(0.93)" /></svg>
<svg class="a" style="left:913px;top:979px;" width="12" height="8" viewBox="0 0 12 8"><path d="M2 6.2 L6 2.4 L10 6.2" stroke="#f4f4f4" stroke-width="1.6" fill="none" stroke-linecap="round" stroke-linejoin="round"/></svg>
<div class="t" style="left:820px;top:1006.65px;font-family:'Liberation Sans',sans-serif;font-size:14px;color:#f4f4f4;font-weight:bold;letter-spacing:-0.01px">Отреагировать</div>
<div class="a" style="left:981px;top:972px;width:30px;height:24.5px;background:#02fb8c;border-radius:3.5px"></div>
<svg class="a" style="left:987px;top:975px;" width="18" height="18" viewBox="0 0 18 18"><path d="M3.2 9 L9 3.2 L14.8 9 M9 3.5 V15" stroke="#000" stroke-width="2.3" fill="none" stroke-linecap="square"/></svg>
<div class="t" style="left:955px;top:1006.65px;font-family:'Liberation Sans',sans-serif;font-size:14px;color:#f4f4f4;font-weight:bold;letter-spacing:-0.11px">Поделиться</div>
<svg class="a" style="left:1157px;top:969px;" width="32" height="32" viewBox="0 0 32 32"><circle cx="16" cy="16" r="14.2" stroke="#fff" stroke-width="1.9" fill="none"/><circle cx="16" cy="9" r="1.8" fill="#fff"/><path d="M13 13.5 H17 V22 M12.5 22.5 H20" stroke="#fff" stroke-width="2" fill="none"/></svg>
<div class="t" style="left:1069px;top:1006.65px;font-family:'Liberation Sans',sans-serif;font-size:14px;color:#f4f4f4;font-weight:bold;letter-spacing:0.28px">Информация о конференции</div>
<svg class="a" style="left:1322px;top:969px;" width="32" height="32" viewBox="0 0 32 32"><circle cx="16" cy="16" r="13.5" stroke="#fff" stroke-width="1.9" fill="none"/><circle cx="16" cy="16" r="6.2" fill="#fff"/></svg>
<div class="t" style="left:1313px;top:1006.65px;font-family:'Liberation Sans',sans-serif;font-size:14px;color:#f4f4f4;font-weight:bold;letter-spacing:-0.29px">Запись</div>
<svg class="a" style="left:1437px;top:969px;" width="32" height="32" viewBox="0 0 32 32"><circle cx="16" cy="16" r="14.2" stroke="#fff" stroke-width="1.9" fill="none"/><circle cx="9.5" cy="16" r="1.9" fill="#fff"/><circle cx="16" cy="16" r="1.9" fill="#fff"/><circle cx="22.5" cy="16" r="1.9" fill="#fff"/></svg>
<div class="t" style="left:1397px;top:1006.65px;font-family:'Liberation Sans',sans-serif;font-size:14px;color:#f4f4f4;font-weight:bold;letter-spacing:0.04px">Дополнительно</div>
<svg class="a" style="left:1843px;top:967px;" width="36" height="34" viewBox="0 0 36 34"><path d="M13 2.5 H30.5 V24 L22 29.5 V8.5 L30.5 3" stroke="#f0145a" stroke-width="2" fill="none" stroke-linejoin="miter"/>
<circle cx="10.5" cy="9.5" r="3.6" stroke="#fff" stroke-width="1.8" fill="none"/>
<path d="M7 14.5 Q3 16 3 19 Q3.5 21 6 20 L8 18.5 L7.5 22 L4 28 Q3.5 30.5 6 30.5 Q7.5 30.5 8.5 29 L11 24.5 L12.5 29 Q13.5 30.5 15 30 Q16.5 29.5 16 27.5 L14 21 L14.5 18 L16 20.5 Q17.5 21.5 18.5 20 Q19 18.5 17.5 17 L14 14 Q12 13 10 13 Z" stroke="#fff" stroke-width="1.7" fill="none" stroke-linejoin="round"/></svg>
<div class="t" style="left:1838px;top:1006.65px;font-family:'Liberation Sans',sans-serif;font-size:14px;color:#f4f4f4;font-weight:bold;letter-spacing:-1.03px">Выйти</div>
<div class="a" style="left:0px;top:1030px;width:1920px;height:50px;background:linear-gradient(90deg,#eaddd6 0%,#e6ddd6 9%,#dfe0da 15%,#e4dcd5 20%,#e7dbd6 26%,#e4dbd8 29%,#d5dbe1 32.5%,#d2dae2 45%,#d2dae2 68.5%,#d5dedd 71%,#dcdcdc 73%,#e6d8dc 75.5%,#e7d9dd 85%,#e6dadd 100%);"></div>
<div class="a" style="left:310px;top:1030px;width:61px;height:50px;background:#f3eeeb;"></div>
<div class="a" style="left:253px;top:1077px;width:51px;height:3px;background:#245985;"></div>
<div class="a" style="left:310px;top:1077px;width:61px;height:3px;background:#245985;"></div>
<div class="a" style="left:377px;top:1077px;width:51px;height:3px;background:#245985;"></div>
<div class="a" style="left:439px;top:1077px;width:51px;height:3px;background:#245985;"></div>
<svg class="a" style="left:19px;top:1044px;" width="22" height="22" viewBox="0 0 22 22"><path d="M1 3.5 L8 2.6 V10.2 H1 Z M9.3 2.4 L21 0.9 V10.2 H9.3 Z M1 11.5 H8 V19.2 L1 18.3 Z M9.3 11.5 H21 V20.9 L9.3 19.4 Z" fill="#0a0a0a"/></svg>
<svg class="a" style="left:75px;top:1040px;" width="32" height="32" viewBox="0 0 32 32"><circle cx="18" cy="12.3" r="9.3" stroke="#0a0a0a" stroke-width="2.4" fill="none"/><path d="M11.3 19 L3 27.3" stroke="#0a0a0a" stroke-width="2.6" stroke-linecap="round"/></svg>
<svg class="a" style="left:138px;top:1039px;" width="32" height="32" viewBox="0 0 32 32"><defs><linearGradient id="eg1" x1="0" y1="0.2" x2="1" y2="0.8"><stop offset="0" stop-color="#2ab8f0"/><stop offset="0.55" stop-color="#37c8b0"/><stop offset="1" stop-color="#6ee050"/></linearGradient>
<linearGradient id="eg2" x1="0" y1="0" x2="0.3" y2="1"><stop offset="0" stop-color="#1e90e8"/><stop offset="1" stop-color="#0c5cc0"/></linearGradient></defs>
<path d="M1 15.5 Q1 1 16 1 Q30.5 1 31 15.5 Q31 21 27 21.5 L18.5 21.5 Q16 21.5 16 19.5 Q16 18 18.5 17.8 Q22 17 21 13 Q19.5 9 14 9.5 Q6 10.5 4.5 17 Z" fill="url(#eg1)"/>
<path d="M1 15.5 Q2 8 11 8 Q18 8.5 17.5 13.5 Q14 13.5 12.5 16 Q10.5 21 15.5 24.5 Q20.5 27.5 28 23.5 Q25 30.5 16 31 Q1.5 30.5 1 15.5 Z" fill="url(#eg2)"/>
<path d="M12.5 16 Q10.5 21 15.5 24.5 Q20.5 27.5 28 23.5 Q22 27 16 25 Q9 21 12.5 16 Z" fill="#0a4fa8" opacity="0.6"/></svg>
<svg class="a" style="left:202px;top:1041px;" width="27" height="27" viewBox="0 0 27 27"><rect x="12" y="3" width="14.5" height="21" fill="#fff" stroke="#2b579a" stroke-width="1.2"/><path d="M14 8 H25 M14 11.5 H25 M14 15 H25 M14 18.5 H25" stroke="#2b579a" stroke-width="1.4"/><path d="M0 3 L16 0 V27 L0 24 Z" fill="#2b579a"/><text x="2" y="19" font-family="Liberation Sans" font-weight="bold" font-size="11" fill="#fff">W</text></svg>
<svg class="a" style="left:263px;top:1040px;" width="33" height="33" viewBox="0 0 33 33"><circle cx="15" cy="15" r="15" fill="#dd4436"/>
<path d="M15 15 L2 7.5 A15 15 0 0 0 15 30 Z" fill="#1f9a4a"/>
<path d="M15 15 L28 7.5 A15 15 0 0 1 15 30 Z" fill="#f8c21a"/>
<circle cx="15" cy="15" r="6.5" fill="#fff"/><circle cx="15" cy="15" r="5" fill="#3a7ce8"/>
<circle cx="23" cy="23" r="9.5" fill="#138a6f"/><rect x="22.2" y="18.5" width="1.6" height="8" fill="#9adcc8"/></svg>
<div class="a" style="left:325px;top:1040px;width:30px;height:30px;background:linear-gradient(#2a72f8,#1250e8);border-radius:11px"></div>
<div class="t" style="left:329px;top:1050.02px;font-family:'Liberation Sans',sans-serif;font-size:8.6px;color:#fff;font-weight:normal;letter-spacing:-0.3px;-webkit-text-stroke:0.25px #fff">zoom</div>
<svg class="a" style="left:388px;top:1043px;" width="28" height="24" viewBox="0 0 28 24"><path d="M0 1.5 Q0 0 1.5 0 H10 L12 2.5 H26.5 Q27.5 2.5 27.5 4 V22 Q27.5 23.5 26 23.5 H1.5 Q0 23.5 0 22 Z" fill="#e6a810"/><rect x="0" y="4" width="27.5" height="19.5" rx="1" fill="#fcd265"/><path d="M5 23.5 V14 Q5 12 7 12 H20.5 Q22.5 12 22.5 14 V23.5 H18.5 V16 H9 V23.5 Z" fill="#3d9ae0"/></svg>
<svg class="a" style="left:451px;top:1039px;" width="25" height="32" viewBox="0 0 25 32"><defs><clipPath id="dropc"><path d="M13 1 Q16 5 19 9 Q24 15 24 21 Q24 31 13.5 31 Q2 31 2 21.5 Q2 15 8 9 Q11 6 13 1 Z"/></clipPath></defs>
<g clip-path="url(#dropc)">
<rect x="0" y="0" width="26" height="32" fill="#f8c820"/>
<path d="M0 0 L10 0 Q14 6 17 9 Q20 12 26 12 L26 32 L0 32 Z" fill="#e8588a"/>
<path d="M0 10 Q8 12 14 16 Q19 19 26 19 L26 32 L0 32 Z" fill="#9a6ad6"/>
<path d="M0 17 Q8 19 14 23 Q19 27 26 27 L26 32 L0 32 Z" fill="#32c2f0"/>
<path d="M0 19 Q8 21 14 25" stroke="#4aa8f0" stroke-width="1.5" fill="none" opacity="0.7"/>
</g></svg>
<svg class="a" style="left:1549px;top:1048px;" width="19" height="12" viewBox="0 0 19 12"><path d="M1.5 10.5 L9.5 2.5 L17.5 10.5" stroke="#222" stroke-width="1.5" fill="none"/></svg>
<svg class="a" style="left:1579px;top:1044px;" width="16" height="23" viewBox="0 0 16 23"><rect x="4" y="1" width="8" height="14" rx="4" fill="#222"/><path d="M1.5 10 Q1.5 17.5 8 17.5 Q14.5 17.5 14.5 10" stroke="#222" stroke-width="1.3" fill="none"/><path d="M8 17.5 V21 M4 21.5 H12" stroke="#222" stroke-width="1.3"/></svg>
<svg class="a" style="left:1606px;top:1044px;" width="24" height="23" viewBox="0 0 24 23"><path d="M1.5 4 L21.5 1 V18.5 L1.5 17 Z" stroke="#222" stroke-width="1.3" fill="none"/><path d="M7 9 Q9 6 13 7 L14.5 8.5 M15 12 Q13 15 9 14 L7.5 12.5" stroke="#222" stroke-width="1.2" fill="none"/><circle cx="16.5" cy="17.5" r="4.2" fill="#2a6ee0"/></svg>
<svg class="a" style="left:1636px;top:1046px;" width="24" height="17" viewBox="0 0 24 17"><path d="M3 1.5 V4 M6 1.5 V4 M1.8 4 H7.2 V6.5 Q7.2 9 4.5 9 Q1.8 9 1.8 6.5 Z M4.5 9 V14.5" stroke="#000" stroke-width="1.1" fill="none"/><path d="M8 4.5 H20.3 V14.3 H7" stroke="#000" stroke-width="1.1" fill="none"/><rect x="7" y="6.2" width="11.8" height="6.6" fill="#000"/><rect x="20.3" y="7.8" width="1.4" height="3.2" fill="#000"/></svg>
<svg class="a" style="left:1669px;top:1046px;" width="19" height="19" viewBox="0 0 19 19"><path d="M2.5 16.5 A14 14 0 0 1 16.5 2.5 M6.5 16.5 A10 10 0 0 1 16.5 6.5 M10.5 16.5 A6 6 0 0 1 16.5 10.5" stroke="#000" stroke-width="1.1" fill="none" stroke-linecap="round"/><circle cx="15.5" cy="15" r="1.3" fill="#000"/></svg>
<svg class="a" style="left:1696px;top:1045px;" width="24" height="20" viewBox="0 0 24 20"><path d="M2.5 7 H6.3 L11.5 3 V17 L6.3 13 H2.5 Z" stroke="#000" stroke-width="1.1" fill="none" stroke-linejoin="round"/><path d="M14.3 7.8 Q15.8 10 14.3 12.2 M16.8 5.5 Q19.5 10 16.8 14.5 M19.5 2.5 Q23.5 10 19.5 17.5" stroke="#000" stroke-width="1.1" fill="none" stroke-linecap="round"/></svg>
<div class="t" style="left:1732px;top:1050.00px;font-family:'Liberation Sans',sans-serif;font-size:13px;color:#1a1a1a;font-weight:normal;letter-spacing:-0.2px">УКР</div>
<div class="t" style="left:1794px;top:1038.24px;font-family:'Liberation Sans',sans-serif;font-size:13.3px;color:#1a1a1a;font-weight:normal;">11:26</div>
<div class="t" style="left:1777px;top:1061.04px;font-family:'Liberation Sans',sans-serif;font-size:13.3px;color:#1a1a1a;font-weight:normal;">19.12.2025</div>
<svg class="a" style="left:1868px;top:1044px;" width="23" height="21" viewBox="0 0 23 21"><path d="M1.5 1.5 H21 V15.5 H13.5 L11 18.5 L8.5 15.5 H1.5 Z" stroke="#222" stroke-width="1.4" fill="none" stroke-linejoin="round"/></svg>
<div class="a" style="left:1914px;top:1034px;width:1px;height:44px;background:#b8b0b4;"></div>
</body></html>
